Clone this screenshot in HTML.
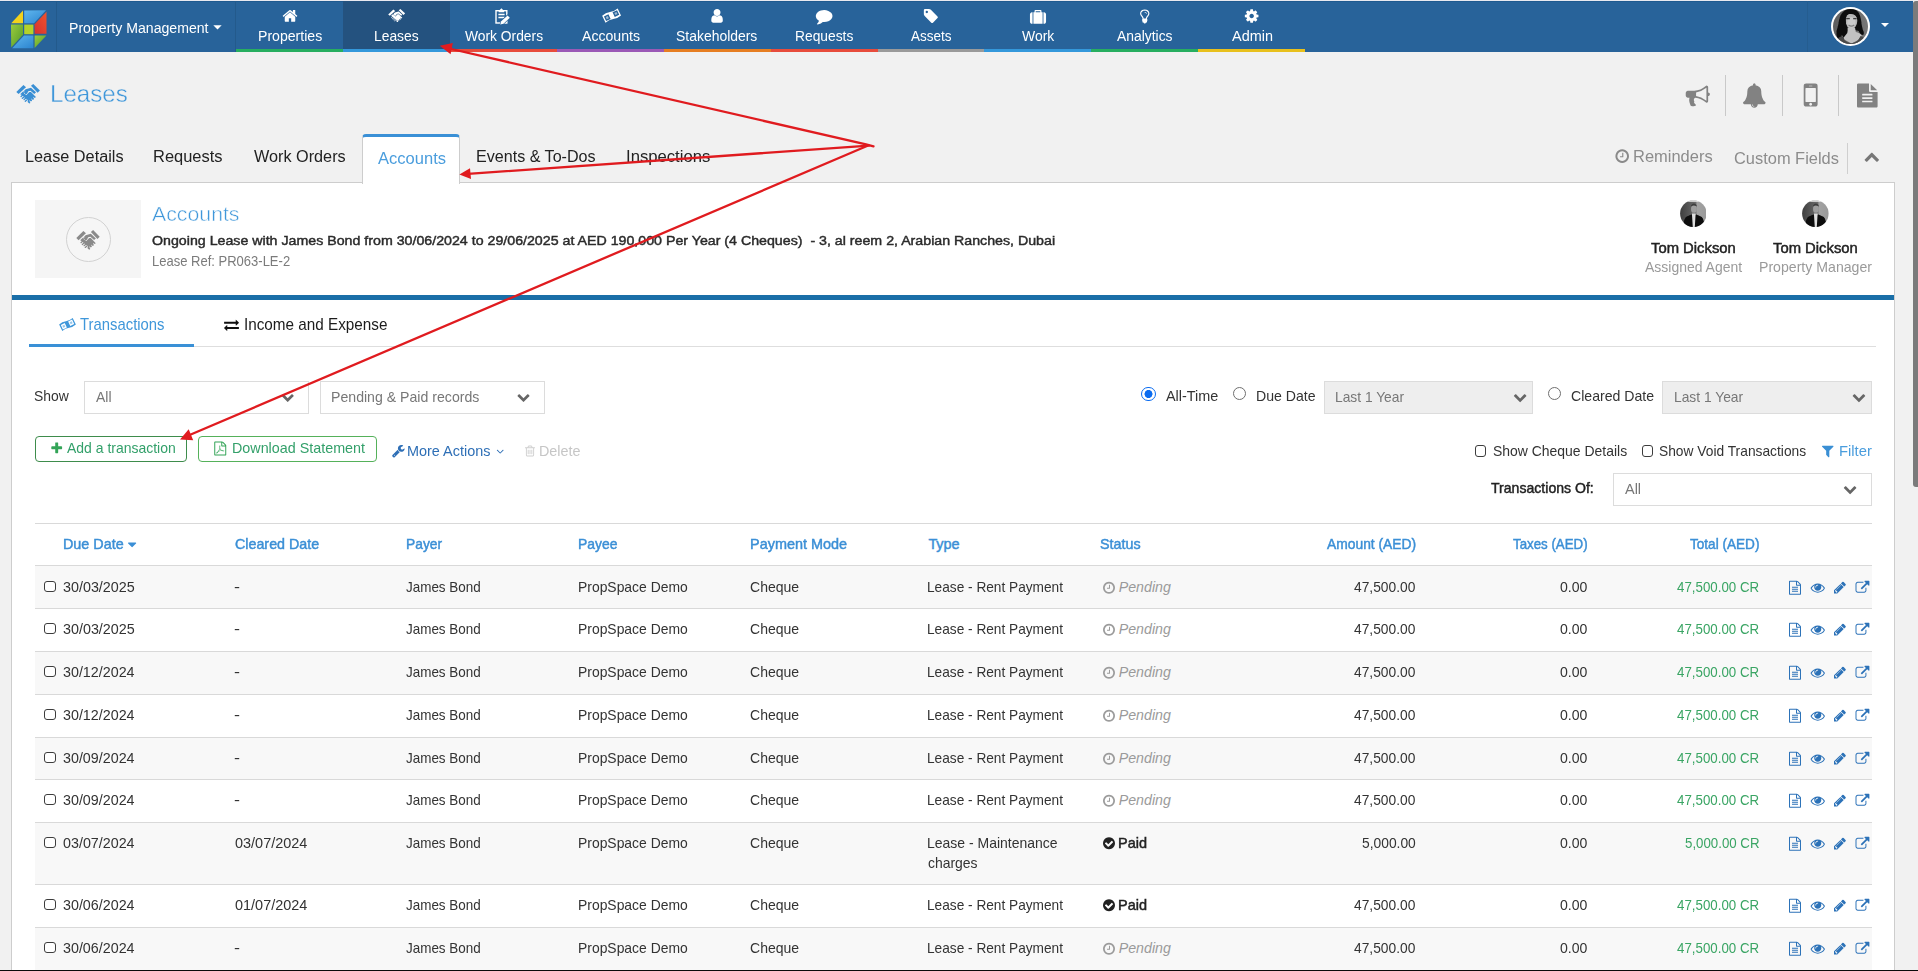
<!DOCTYPE html><html lang="en"><head><meta charset="utf-8"><title>Leases - Accounts</title><style>
html,body{margin:0;padding:0}body{width:1918px;height:971px;overflow:hidden;position:relative;background:#f1f1f1;font-family:"Liberation Sans",sans-serif;-webkit-font-smoothing:antialiased}
.b,.ic,.t{position:absolute;display:block}.t{white-space:pre;transform-origin:0 0;margin:0}.p{display:inline-block;width:0;height:0}
</style></head><body>
<svg width="0" height="0" style="position:absolute" aria-hidden="true"><defs><path id="g-angle_down" d="M1065 777 599 311Q589 301 576.0 301.0Q563 301 553 311L87 777Q77 787 77.0 800.0Q77 813 87 823L137 873Q147 883 160.0 883.0Q173 883 183 873L576 480L969 873Q979 883 992.0 883.0Q1005 883 1015 873L1065 823Q1075 813 1075.0 800.0Q1075 787 1065 777Z"/><path id="g-bell" d="M896 -144Q837 -144 794.5 -101.5Q752 -59 752 0Q752 16 736.0 16.0Q720 16 720 0Q720 -73 771.5 -124.5Q823 -176 896 -176Q912 -176 912.0 -160.0Q912 -144 896 -144ZM1728 128Q1728 76 1690.0 38.0Q1652 0 1600 0H1152Q1152 -106 1077.0 -181.0Q1002 -256 896.0 -256.0Q790 -256 715.0 -181.0Q640 -106 640 0H192Q140 0 102.0 38.0Q64 76 64 128Q114 170 155.0 216.0Q196 262 240.0 335.5Q284 409 314.5 494.0Q345 579 364.5 700.0Q384 821 384 960Q384 1112 501.0 1242.5Q618 1373 808 1401Q800 1420 800 1440Q800 1480 828.0 1508.0Q856 1536 896.0 1536.0Q936 1536 964.0 1508.0Q992 1480 992 1440Q992 1420 984 1401Q1174 1373 1291.0 1242.5Q1408 1112 1408 960Q1408 821 1427.5 700.0Q1447 579 1477.5 494.0Q1508 409 1552.0 335.5Q1596 262 1637.0 216.0Q1678 170 1728 128Z"/><path id="g-bulb" d="M736 960Q736 947 726.5 937.5Q717 928 704.0 928.0Q691 928 681.5 937.5Q672 947 672 960Q672 1006 618.0 1031.0Q564 1056 512 1056Q499 1056 489.5 1065.5Q480 1075 480.0 1088.0Q480 1101 489.5 1110.5Q499 1120 512 1120Q562 1120 611.5 1104.0Q661 1088 698.5 1050.0Q736 1012 736 960ZM896 960Q896 1032 861.5 1094.0Q827 1156 771.5 1195.5Q716 1235 648.5 1257.5Q581 1280 512.0 1280.0Q443 1280 375.5 1257.5Q308 1235 252.5 1195.5Q197 1156 162.5 1094.0Q128 1032 128 960Q128 859 196 780Q206 769 226.5 747.0Q247 725 257 714Q385 561 398 416H626Q639 561 767 714Q777 725 797.5 747.0Q818 769 828 780Q896 859 896 960ZM1024 960Q1024 805 921 692Q876 643 846.5 605.0Q817 567 787.0 509.5Q757 452 753 402Q800 374 800 320Q800 283 775 256Q800 229 800 192Q800 140 755 111Q768 88 768 64Q768 18 736.5 -7.0Q705 -32 659 -32Q639 -76 599.0 -102.0Q559 -128 512.0 -128.0Q465 -128 425.0 -102.0Q385 -76 365 -32Q319 -32 287.5 -7.0Q256 18 256 64Q256 88 269 111Q224 140 224 192Q224 229 249 256Q224 283 224 320Q224 374 271 402Q267 452 237.0 509.5Q207 567 177.5 605.0Q148 643 103 692Q0 805 0 960Q0 1059 44.5 1144.5Q89 1230 161.5 1286.5Q234 1343 325.5 1375.5Q417 1408 512.0 1408.0Q607 1408 698.5 1375.5Q790 1343 862.5 1286.5Q935 1230 979.5 1144.5Q1024 1059 1024 960Z"/><path id="g-bullhorn" d="M1664 896Q1717 896 1754.5 858.5Q1792 821 1792.0 768.0Q1792 715 1754.5 677.5Q1717 640 1664 640V256Q1664 204 1626.0 166.0Q1588 128 1536 128Q1119 475 724 508Q666 489 633.0 442.0Q600 395 602.0 341.5Q604 288 642 249Q622 216 619.0 183.5Q616 151 625.0 125.5Q634 100 658.5 70.5Q683 41 706.5 20.5Q730 0 768 -30Q739 -88 656.5 -113.0Q574 -138 488.0 -124.5Q402 -111 356 -69Q349 -46 326.5 18.5Q304 83 294.5 113.0Q285 143 271.5 202.0Q258 261 256.5 303.0Q255 345 260.0 401.5Q265 458 282 512H160Q94 512 47.0 559.0Q0 606 0 672V864Q0 930 47.0 977.0Q94 1024 160 1024H640Q1075 1024 1536 1408Q1588 1408 1626.0 1370.0Q1664 1332 1664 1280ZM1536 292V1246Q1142 944 768 903V633Q1145 591 1536 292Z"/><path id="g-caret_down" d="M1005 787 557 339Q538 320 512.0 320.0Q486 320 467 339L19 787Q0 806 0.0 832.0Q0 858 19.0 877.0Q38 896 64 896H960Q986 896 1005.0 877.0Q1024 858 1024.0 832.0Q1024 806 1005 787Z"/><path id="g-check_circle" d="M1284 802Q1284 830 1266 848L1175 938Q1156 957 1130.0 957.0Q1104 957 1085 938L677 531L451 757Q432 776 406.0 776.0Q380 776 361 757L270 667Q252 649 252 621Q252 594 270 576L632 214Q651 195 677 195Q704 195 723 214L1266 757Q1284 775 1284 802ZM1433.0 1025.5Q1536 849 1536.0 640.0Q1536 431 1433.0 254.5Q1330 78 1153.5 -25.0Q977 -128 768.0 -128.0Q559 -128 382.5 -25.0Q206 78 103.0 254.5Q0 431 0.0 640.0Q0 849 103.0 1025.5Q206 1202 382.5 1305.0Q559 1408 768.0 1408.0Q977 1408 1153.5 1305.0Q1330 1202 1433.0 1025.5Z"/><path id="g-chev_down" d="M1683 728 941 -13Q922 -32 896.0 -32.0Q870 -32 851 -13L109 728Q90 747 90.0 773.5Q90 800 109 819L275 984Q294 1003 320.0 1003.0Q346 1003 365 984L896 453L1427 984Q1446 1003 1472.0 1003.0Q1498 1003 1517 984L1683 819Q1702 800 1702.0 773.5Q1702 747 1683 728Z"/><path id="g-chev_up" d="M1683 205 1517 40Q1498 21 1472.0 21.0Q1446 21 1427 40L896 571L365 40Q346 21 320.0 21.0Q294 21 275 40L109 205Q90 224 90.0 250.5Q90 277 109 296L851 1037Q870 1056 896.0 1056.0Q922 1056 941 1037L1683 296Q1702 277 1702.0 250.5Q1702 224 1683 205Z"/><path id="g-clock" d="M896 992V544Q896 530 887.0 521.0Q878 512 864 512H544Q530 512 521.0 521.0Q512 530 512 544V608Q512 622 521.0 631.0Q530 640 544 640H768V992Q768 1006 777.0 1015.0Q786 1024 800 1024H864Q878 1024 887.0 1015.0Q896 1006 896 992ZM1239.0 367.0Q1312 492 1312.0 640.0Q1312 788 1239.0 913.0Q1166 1038 1041.0 1111.0Q916 1184 768.0 1184.0Q620 1184 495.0 1111.0Q370 1038 297.0 913.0Q224 788 224.0 640.0Q224 492 297.0 367.0Q370 242 495.0 169.0Q620 96 768.0 96.0Q916 96 1041.0 169.0Q1166 242 1239.0 367.0ZM1433.0 1025.5Q1536 849 1536.0 640.0Q1536 431 1433.0 254.5Q1330 78 1153.5 -25.0Q977 -128 768.0 -128.0Q559 -128 382.5 -25.0Q206 78 103.0 254.5Q0 431 0.0 640.0Q0 849 103.0 1025.5Q206 1202 382.5 1305.0Q559 1408 768.0 1408.0Q977 1408 1153.5 1305.0Q1330 1202 1433.0 1025.5Z"/><path id="g-cog" d="M949.0 459.0Q1024 534 1024.0 640.0Q1024 746 949.0 821.0Q874 896 768.0 896.0Q662 896 587.0 821.0Q512 746 512.0 640.0Q512 534 587.0 459.0Q662 384 768.0 384.0Q874 384 949.0 459.0ZM1536 749V527Q1536 515 1528.0 504.0Q1520 493 1508 491L1323 463Q1304 409 1284 372Q1319 322 1391 234Q1401 222 1401.0 209.0Q1401 196 1392 186Q1365 149 1293.0 78.0Q1221 7 1199 7Q1187 7 1173 16L1035 124Q991 101 944 86Q928 -50 915 -100Q908 -128 879 -128H657Q643 -128 632.5 -119.5Q622 -111 621 -98L593 86Q544 102 503 123L362 16Q352 7 337 7Q323 7 312 18Q186 132 147 186Q140 196 140 209Q140 221 148 232Q163 253 199.0 298.5Q235 344 253 369Q226 419 212 468L29 495Q16 497 8.0 507.5Q0 518 0 531V753Q0 765 8.0 776.0Q16 787 27 789L213 817Q227 863 252 909Q212 966 145 1047Q135 1059 135 1071Q135 1081 144 1094Q170 1130 242.5 1201.5Q315 1273 337 1273Q350 1273 363 1263L501 1156Q545 1179 592 1194Q608 1330 621 1380Q628 1408 657 1408H879Q893 1408 903.5 1399.5Q914 1391 915 1378L943 1194Q992 1178 1033 1157L1175 1264Q1184 1273 1199 1273Q1212 1273 1224 1263Q1353 1144 1389 1093Q1396 1085 1396 1071Q1396 1059 1388 1048Q1373 1027 1337.0 981.5Q1301 936 1283 911Q1309 861 1324 813L1507 785Q1520 783 1528.0 772.5Q1536 762 1536 749Z"/><path id="g-comment" d="M896 0Q826 0 751 8Q553 -167 291 -234Q242 -248 177 -256Q160 -258 146.5 -247.0Q133 -236 129 -218V-217Q126 -213 128.5 -205.0Q131 -197 130.5 -195.0Q130 -193 135.0 -185.5Q140 -178 141.0 -176.5Q142 -175 148.0 -168.0Q154 -161 156 -159Q163 -151 187.0 -124.5Q211 -98 221.5 -86.5Q232 -75 252.5 -47.0Q273 -19 285.0 4.0Q297 27 312.0 63.0Q327 99 338 139Q181 228 90.5 359.0Q0 490 0 640Q0 770 71.0 888.5Q142 1007 262.0 1093.0Q382 1179 548.0 1229.5Q714 1280 896 1280Q1140 1280 1346.0 1194.5Q1552 1109 1672.0 961.5Q1792 814 1792.0 640.0Q1792 466 1672.0 318.5Q1552 171 1346.0 85.5Q1140 0 896 0Z"/><path id="g-exchange" d="M1792 352V160Q1792 147 1782.5 137.5Q1773 128 1760 128H384V-64Q384 -77 374.5 -86.5Q365 -96 352 -96Q340 -96 328 -86L9 234Q0 243 0 256Q0 270 9 279L329 599Q338 608 352 608Q365 608 374.5 598.5Q384 589 384 576V384H1760Q1773 384 1782.5 374.5Q1792 365 1792 352ZM1783 873 1463 553Q1454 544 1440 544Q1427 544 1417.5 553.5Q1408 563 1408 576V768H32Q19 768 9.5 777.5Q0 787 0 800V992Q0 1005 9.5 1014.5Q19 1024 32 1024H1408V1216Q1408 1230 1417.0 1239.0Q1426 1248 1440 1248Q1452 1248 1464 1238L1783 919Q1792 910 1792.0 896.0Q1792 882 1783 873Z"/><path id="g-ext" d="M1408 608V288Q1408 169 1323.5 84.5Q1239 0 1120 0H288Q169 0 84.5 84.5Q0 169 0 288V1120Q0 1239 84.5 1323.5Q169 1408 288 1408H992Q1006 1408 1015.0 1399.0Q1024 1390 1024 1376V1312Q1024 1298 1015.0 1289.0Q1006 1280 992 1280H288Q222 1280 175.0 1233.0Q128 1186 128 1120V288Q128 222 175.0 175.0Q222 128 288 128H1120Q1186 128 1233.0 175.0Q1280 222 1280 288V608Q1280 622 1289.0 631.0Q1298 640 1312 640H1376Q1390 640 1399.0 631.0Q1408 622 1408 608ZM1792 1472V960Q1792 934 1773.0 915.0Q1754 896 1728.0 896.0Q1702 896 1683 915L1507 1091L855 439Q845 429 832.0 429.0Q819 429 809 439L695 553Q685 563 685.0 576.0Q685 589 695 599L1347 1251L1171 1427Q1152 1446 1152.0 1472.0Q1152 1498 1171.0 1517.0Q1190 1536 1216 1536H1728Q1754 1536 1773.0 1517.0Q1792 1498 1792 1472Z"/><path id="g-eye" d="M1664 576Q1512 812 1283 929Q1344 825 1344 704Q1344 519 1212.5 387.5Q1081 256 896.0 256.0Q711 256 579.5 387.5Q448 519 448 704Q448 825 509 929Q280 812 128 576Q261 371 461.5 249.5Q662 128 896.0 128.0Q1130 128 1330.5 249.5Q1531 371 1664 576ZM896 1008Q771 1008 681.5 918.5Q592 829 592 704Q592 684 606.0 670.0Q620 656 640.0 656.0Q660 656 674.0 670.0Q688 684 688 704Q688 790 749.0 851.0Q810 912 896 912Q916 912 930.0 926.0Q944 940 944.0 960.0Q944 980 930.0 994.0Q916 1008 896 1008ZM1772 507Q1632 277 1395.5 138.5Q1159 0 896.0 0.0Q633 0 396.5 139.0Q160 278 20 507Q0 542 0.0 576.0Q0 610 20 645Q160 874 396.5 1013.0Q633 1152 896.0 1152.0Q1159 1152 1395.5 1013.0Q1632 874 1772 645Q1792 610 1792.0 576.0Q1792 542 1772 507Z"/><path id="g-file_pdf" d="M1468 1156Q1496 1128 1516.0 1080.0Q1536 1032 1536 992V-160Q1536 -200 1508.0 -228.0Q1480 -256 1440 -256H96Q56 -256 28.0 -228.0Q0 -200 0 -160V1440Q0 1480 28.0 1508.0Q56 1536 96 1536H992Q1032 1536 1080.0 1516.0Q1128 1496 1156 1468ZM1024 1400V1024H1400Q1390 1053 1378 1065L1065 1378Q1053 1390 1024 1400ZM1408 -128V896H992Q952 896 924.0 924.0Q896 952 896 992V1408H128V-128ZM894 465Q927 439 978 409Q1037 416 1095 416Q1242 416 1272 367Q1288 345 1274 315Q1274 314 1273.0 313.0Q1272 312 1271 311V310Q1265 272 1200 272Q1152 272 1085.0 292.0Q1018 312 955 345Q734 321 563 262Q410 0 321 0Q306 0 293 7L269 19Q268 20 263 24Q253 34 257 60Q266 100 313.0 151.5Q360 203 445 248Q459 257 468 242Q470 240 470 238Q522 323 577 435Q645 571 681 697Q657 779 650.5 856.5Q644 934 657 984Q668 1024 699 1024H720H721Q744 1024 756 1009Q774 988 765 941Q763 935 761 933Q762 930 762 925V895Q760 772 748 703Q803 539 894 465ZM318 54Q370 78 455 212Q404 172 367.5 128.0Q331 84 318 54ZM716 974Q701 932 714 842Q715 849 721 886Q721 889 728 929Q729 933 732 937Q731 938 731 939Q730 941 730 942Q729 964 717 978Q717 977 716 976ZM592 313Q727 367 876 394Q874 395 863.0 403.5Q852 412 847 417Q771 484 720 593Q693 507 637 396Q607 340 592 313ZM1238 329Q1214 353 1098 353Q1174 325 1222 325Q1236 325 1240 326Q1240 327 1238 329Z"/><path id="g-file_text" d="M1468 1060Q1482 1046 1496 1024H1024V1496Q1046 1482 1060 1468ZM992 896H1536V-160Q1536 -200 1508.0 -228.0Q1480 -256 1440 -256H96Q56 -256 28.0 -228.0Q0 -200 0 -160V1440Q0 1480 28.0 1508.0Q56 1536 96 1536H896V992Q896 952 924.0 924.0Q952 896 992 896ZM1152 160V224Q1152 238 1143.0 247.0Q1134 256 1120 256H416Q402 256 393.0 247.0Q384 238 384 224V160Q384 146 393.0 137.0Q402 128 416 128H1120Q1134 128 1143.0 137.0Q1152 146 1152 160ZM1152 416V480Q1152 494 1143.0 503.0Q1134 512 1120 512H416Q402 512 393.0 503.0Q384 494 384 480V416Q384 402 393.0 393.0Q402 384 416 384H1120Q1134 384 1143.0 393.0Q1152 402 1152 416ZM1152 672V736Q1152 750 1143.0 759.0Q1134 768 1120 768H416Q402 768 393.0 759.0Q384 750 384 736V672Q384 658 393.0 649.0Q402 640 416 640H1120Q1134 640 1143.0 649.0Q1152 658 1152 672Z"/><path id="g-file_text_o" d="M1468 1156Q1496 1128 1516.0 1080.0Q1536 1032 1536 992V-160Q1536 -200 1508.0 -228.0Q1480 -256 1440 -256H96Q56 -256 28.0 -228.0Q0 -200 0 -160V1440Q0 1480 28.0 1508.0Q56 1536 96 1536H992Q1032 1536 1080.0 1516.0Q1128 1496 1156 1468ZM1024 1400V1024H1400Q1390 1053 1378 1065L1065 1378Q1053 1390 1024 1400ZM1408 -128V896H992Q952 896 924.0 924.0Q896 952 896 992V1408H128V-128ZM384 736Q384 750 393.0 759.0Q402 768 416 768H1120Q1134 768 1143.0 759.0Q1152 750 1152 736V672Q1152 658 1143.0 649.0Q1134 640 1120 640H416Q402 640 393.0 649.0Q384 658 384 672ZM1120 512Q1134 512 1143.0 503.0Q1152 494 1152 480V416Q1152 402 1143.0 393.0Q1134 384 1120 384H416Q402 384 393.0 393.0Q384 402 384 416V480Q384 494 393.0 503.0Q402 512 416 512ZM1120 256Q1134 256 1143.0 247.0Q1152 238 1152 224V160Q1152 146 1143.0 137.0Q1134 128 1120 128H416Q402 128 393.0 137.0Q384 146 384 160V224Q384 238 393.0 247.0Q402 256 416 256Z"/><path id="g-filter" d="M1403 1241Q1420 1200 1389 1171L896 678V-64Q896 -106 857 -123Q844 -128 832 -128Q805 -128 787 -109L531 147Q512 166 512 192V678L19 1171Q-12 1200 5 1241Q22 1280 64 1280H1344Q1386 1280 1403 1241Z"/><path id="g-home" d="M1408 544V64Q1408 38 1389.0 19.0Q1370 0 1344 0H960V384H704V0H320Q294 0 275.0 19.0Q256 38 256 64V544Q256 545 256.5 547.0Q257 549 257 550L832 1024L1407 550Q1408 548 1408 544ZM1631 613 1569 539Q1561 530 1548 528H1545Q1532 528 1524 535L832 1112L140 535Q128 527 116 528Q103 530 95 539L33 613Q25 623 26.0 636.5Q27 650 37 658L756 1257Q788 1283 832.0 1283.0Q876 1283 908 1257L1152 1053V1248Q1152 1262 1161.0 1271.0Q1170 1280 1184 1280H1376Q1390 1280 1399.0 1271.0Q1408 1262 1408 1248V840L1627 658Q1637 650 1638.0 636.5Q1639 623 1631 613Z"/><path id="g-mobile" d="M440.5 71.5Q464 95 464.0 128.0Q464 161 440.5 184.5Q417 208 384.0 208.0Q351 208 327.5 184.5Q304 161 304.0 128.0Q304 95 327.5 71.5Q351 48 384.0 48.0Q417 48 440.5 71.5ZM672 288V992Q672 1005 662.5 1014.5Q653 1024 640 1024H128Q115 1024 105.5 1014.5Q96 1005 96 992V288Q96 275 105.5 265.5Q115 256 128 256H640Q653 256 662.5 265.5Q672 275 672 288ZM464 1152H304Q288 1152 288.0 1136.0Q288 1120 304 1120H464Q480 1120 480.0 1136.0Q480 1152 464 1152ZM768 1152V128Q768 76 730.0 38.0Q692 0 640 0H128Q76 0 38.0 38.0Q0 76 0 128V1152Q0 1204 38.0 1242.0Q76 1280 128 1280H640Q692 1280 730.0 1242.0Q768 1204 768 1152Z"/><path id="g-pencil" d="M363 0 454 91 219 326 128 235V128H256V0ZM886 928Q886 950 864 950Q854 950 847 943L305 401Q298 394 298 384Q298 362 320 362Q330 362 337 369L879 911Q886 918 886 928ZM832 1120 1248 704 416 -128H0V288ZM1515 1024Q1515 971 1478 934L1312 768L896 1184L1062 1349Q1098 1387 1152 1387Q1205 1387 1243 1349L1478 1115Q1515 1076 1515 1024Z"/><path id="g-plus" d="M1408 800V608Q1408 568 1380.0 540.0Q1352 512 1312 512H896V96Q896 56 868.0 28.0Q840 0 800 0H608Q568 0 540.0 28.0Q512 56 512 96V512H96Q56 512 28.0 540.0Q0 568 0 608V800Q0 840 28.0 868.0Q56 896 96 896H512V1312Q512 1352 540.0 1380.0Q568 1408 608 1408H800Q840 1408 868.0 1380.0Q896 1352 896 1312V896H1312Q1352 896 1380.0 868.0Q1408 840 1408 800Z"/><path id="g-suitcase" d="M640 1152H1152V1280H640ZM288 1152V-128H224Q132 -128 66.0 -62.0Q0 4 0 96V928Q0 1020 66.0 1086.0Q132 1152 224 1152ZM1408 1152V-128H384V1152H512V1312Q512 1352 540.0 1380.0Q568 1408 608 1408H1184Q1224 1408 1252.0 1380.0Q1280 1352 1280 1312V1152ZM1792 928V96Q1792 4 1726.0 -62.0Q1660 -128 1568 -128H1504V1152H1568Q1660 1152 1726.0 1086.0Q1792 1020 1792 928Z"/><path id="g-tag" d="M410.5 997.5Q448 1035 448.0 1088.0Q448 1141 410.5 1178.5Q373 1216 320.0 1216.0Q267 1216 229.5 1178.5Q192 1141 192.0 1088.0Q192 1035 229.5 997.5Q267 960 320.0 960.0Q373 960 410.5 997.5ZM1515 512Q1515 459 1478 422L987 -70Q948 -107 896 -107Q843 -107 806 -70L91 646Q53 683 26.5 747.0Q0 811 0 864V1280Q0 1332 38.0 1370.0Q76 1408 128 1408H544Q597 1408 661.0 1381.5Q725 1355 763 1317L1478 603Q1515 564 1515 512Z"/><path id="g-trash" d="M512 800V224Q512 210 503.0 201.0Q494 192 480 192H416Q402 192 393.0 201.0Q384 210 384 224V800Q384 814 393.0 823.0Q402 832 416 832H480Q494 832 503.0 823.0Q512 814 512 800ZM768 800V224Q768 210 759.0 201.0Q750 192 736 192H672Q658 192 649.0 201.0Q640 210 640 224V800Q640 814 649.0 823.0Q658 832 672 832H736Q750 832 759.0 823.0Q768 814 768 800ZM1024 800V224Q1024 210 1015.0 201.0Q1006 192 992 192H928Q914 192 905.0 201.0Q896 210 896 224V800Q896 814 905.0 823.0Q914 832 928 832H992Q1006 832 1015.0 823.0Q1024 814 1024 800ZM1152 76V1024H256V76Q256 54 263.0 35.5Q270 17 277.5 8.5Q285 0 288 0H1120Q1123 0 1130.5 8.5Q1138 17 1145.0 35.5Q1152 54 1152 76ZM480 1152H928L880 1269Q873 1278 863 1280H546Q536 1278 529 1269ZM1408 1120V1056Q1408 1042 1399.0 1033.0Q1390 1024 1376 1024H1280V76Q1280 -7 1233.0 -67.5Q1186 -128 1120 -128H288Q222 -128 175.0 -69.5Q128 -11 128 72V1024H32Q18 1024 9.0 1033.0Q0 1042 0 1056V1120Q0 1134 9.0 1143.0Q18 1152 32 1152H341L411 1319Q426 1356 465.0 1382.0Q504 1408 544 1408H864Q904 1408 943.0 1382.0Q982 1356 997 1319L1067 1152H1376Q1390 1152 1399.0 1143.0Q1408 1134 1408 1120Z"/><path id="g-user" d="M1280 137Q1280 28 1217.5 -50.0Q1155 -128 1067 -128H213Q125 -128 62.5 -50.0Q0 28 0 137Q0 222 8.5 297.5Q17 373 40.0 449.5Q63 526 98.5 580.5Q134 635 192.5 669.5Q251 704 327 704Q458 576 640.0 576.0Q822 576 953 704Q1029 704 1087.5 669.5Q1146 635 1181.5 580.5Q1217 526 1240.0 449.5Q1263 373 1271.5 297.5Q1280 222 1280 137ZM911.5 1295.5Q1024 1183 1024.0 1024.0Q1024 865 911.5 752.5Q799 640 640.0 640.0Q481 640 368.5 752.5Q256 865 256.0 1024.0Q256 1183 368.5 1295.5Q481 1408 640.0 1408.0Q799 1408 911.5 1295.5Z"/><path id="g-wrench" d="M365.0 19.0Q384 38 384.0 64.0Q384 90 365.0 109.0Q346 128 320.0 128.0Q294 128 275.0 109.0Q256 90 256.0 64.0Q256 38 275.0 19.0Q294 0 320.0 0.0Q346 0 365.0 19.0ZM1028 484 346 -198Q309 -235 256 -235Q204 -235 165 -198L59 -90Q21 -54 21 0Q21 53 59 91L740 772Q779 674 854.5 598.5Q930 523 1028 484ZM1662 919Q1662 880 1639 813Q1592 679 1474.5 595.5Q1357 512 1216 512Q1031 512 899.5 643.5Q768 775 768.0 960.0Q768 1145 899.5 1276.5Q1031 1408 1216 1408Q1274 1408 1337.5 1391.5Q1401 1375 1445 1345Q1461 1334 1461.0 1317.0Q1461 1300 1445 1289L1152 1120V896L1345 789Q1350 792 1424.0 837.5Q1498 883 1559.5 918.5Q1621 954 1630 954Q1645 954 1653.5 944.0Q1662 934 1662 919Z"/></defs></svg>
<div class="b" style="left:0px;top:0px;width:1918px;height:1px;background:#e9e9f0;"></div>
<div class="b" style="left:0px;top:1px;width:1913px;height:51px;background:#28639a;"></div>
<div class="b" style="left:0px;top:1px;width:1913px;height:1px;background:#1f5a90;"></div>
<div class="b" style="left:56px;top:1px;width:1px;height:51px;background:#235a8c;"></div>
<div class="b" style="left:235px;top:1px;width:1px;height:51px;background:#235a8c;"></div>
<div class="b" style="left:1807px;top:1px;width:1px;height:51px;background:#255d90;"></div>
<div class="b" style="left:236px;top:49px;width:107px;height:3px;background:#27ae60;"></div>
<div class="b" style="left:343px;top:1px;width:107px;height:51px;background:#24527f;"></div>
<div class="b" style="left:343px;top:49px;width:107px;height:3px;background:#3498db;"></div>
<div class="b" style="left:450px;top:49px;width:107px;height:3px;background:#e74c3c;"></div>
<div class="b" style="left:557px;top:49px;width:107px;height:3px;background:#9b59b6;"></div>
<div class="b" style="left:664px;top:49px;width:107px;height:3px;background:#e67e22;"></div>
<div class="b" style="left:771px;top:49px;width:107px;height:3px;background:#e74c3c;"></div>
<div class="b" style="left:878px;top:49px;width:106px;height:3px;background:#9a9a9a;"></div>
<div class="b" style="left:984px;top:49px;width:107px;height:3px;background:#3498db;"></div>
<div class="b" style="left:1091px;top:49px;width:107px;height:3px;background:#27ae60;"></div>
<div class="b" style="left:1198px;top:49px;width:107px;height:3px;background:#e8c01c;"></div>
<svg class="ic" style="left:213px;top:25px;width:9px;height:5px" viewBox="0 0 9 5"><path d="M0.3 0.3h8.4L4.5 4.6z" fill="#fff"/></svg>
<svg class="ic" style="left:1881px;top:23px;width:8px;height:4px" viewBox="0 0 8 4"><path d="M0 0h8L4 4z" fill="#fff"/></svg>
<svg class="ic" style="left:10px;top:9px;width:38px;height:41px" viewBox="0 0 38 41" aria-label="logo">
<defs><linearGradient id="lb" x1="0" y1="0" x2="1" y2="1"><stop offset="0" stop-color="#5fb6ee"/><stop offset="1" stop-color="#2b84cf"/></linearGradient>
<linearGradient id="lg" x1="0" y1="0" x2="1" y2="1"><stop offset="0" stop-color="#9ccb3b"/><stop offset="1" stop-color="#4f9a2c"/></linearGradient>
<linearGradient id="lr" x1="1" y1="0" x2="0" y2="1"><stop offset="0" stop-color="#f0532d"/><stop offset="1" stop-color="#d6312f"/></linearGradient></defs>
<path d="M13 1.6v12.6H1.2z" fill="#f2d21c"/>
<path d="M14.2 1.6L36 1.2 24 14.2h-9.8z" fill="url(#lb)"/>
<path d="M36.5 2.8v22H24.6V15.2z" fill="url(#lr)"/>
<path d="M1 15.6h12v10.2L1.2 38.6z" fill="url(#lg)"/>
<path d="M14.2 15.6h9.2v9.6h-9.2z" fill="#b4d22b"/>
<path d="M14 26.6h9.4v12.6H2.2z" fill="url(#lb)"/>
<path d="M24.6 26.6h11.8L24.6 39z" fill="url(#lg)"/></svg>
<svg class="ic" style="left:1831px;top:7px;width:39px;height:39px" viewBox="0 0 39 39" aria-label="user">
<defs><clipPath id="ua"><circle cx="19.5" cy="19.5" r="17.5"/></clipPath><filter id="ub" x="-10%" y="-10%" width="120%" height="120%"><feGaussianBlur stdDeviation="0.7"/></filter>
<linearGradient id="ug" x1="0" x2="1"><stop offset="0" stop-color="#5c5c5c"/><stop offset="1" stop-color="#787878"/></linearGradient></defs>
<circle cx="19.5" cy="19.5" r="19.5" fill="#fff"/>
<g clip-path="url(#ua)"><rect width="39" height="39" fill="url(#ug)"/><g filter="url(#ub)">
<path d="M20 1.800c-5.500 0-9 3-11 8-1.500 4-1.200 7.500-2.700 11.500-1.200 3.200-1.200 7 .2 10 1.200 2.300 3.300 3 5.300 1.800 2.500-1.500 4-4.500 4.500-8l7.500-2 4 1c.5 2 1.800 3.500 4 4 1.300-.6 1.300-2 .7-3.500-1.400-3.500-1.800-7-2.300-10.500-.6-4.500-1.500-7.500-3.500-9.700-1.700-1.700-3.900-2.600-6.700-2.600z" fill="#0e0e0e"/>
<ellipse cx="20.400" cy="13.800" rx="5.900" ry="8" fill="#b4b4b4"/>
<ellipse cx="20.400" cy="15.500" rx="4.200" ry="5.600" fill="#c9c9c9"/>
<path d="M16.600 20.500h7.400l.8 4.500c2.500.5 4.500 1.500 6 3.500l-3.500 4.500-6.800 3.500-6.500-3.500-3.500-4c1.500-2.200 3.400-3.500 5.600-4z" fill="#c2c2c2"/>
<path d="M3 40c.8-6 3.500-9.500 8-11 2 4.500 5 7 9.300 7.200 4.300-.2 7.200-2.700 9.200-7.200 4.500 1.500 7 5 8 11z" fill="#4a4a4a"/>
<path d="M15.200 11.600h3.600M22.200 11.600h3.400" stroke="#3c3c3c" stroke-width="1.200"/><path d="M17.500 18q2.900 2.200 5.800 0" stroke="#7c7c7c" fill="none" stroke-width="1.100"/>
<path d="M14 9c1.500-4 6.500-5.500 10.500-3.300 1.800 1 2.600 3 2.800 6-2-3.200-4.300-4.800-7.300-4.800-2.400 0-4.400.6-6 2.100z" fill="#0e0e0e"/>
<path d="M14.500 7c-2.500 4.500-1 9-3 13.500-1.400 3.200-1.400 7 .8 10.500l4-5c.8-3.500-.5-6-1.300-9.500z" fill="#0e0e0e"/></g></g></svg>
<div class="b" style="left:1725px;top:75px;width:1px;height:41px;background:#c9c9c9;"></div>
<div class="b" style="left:1782px;top:75px;width:1px;height:41px;background:#c9c9c9;"></div>
<div class="b" style="left:1838px;top:75px;width:1px;height:41px;background:#c9c9c9;"></div>
<div class="b" style="left:1847px;top:143px;width:1px;height:31px;background:#cfcfcf;"></div>
<div class="b" style="left:11px;top:182px;width:1884px;height:803px;background:#fff;border:1px solid #cdcdcd;box-sizing:border-box;"></div>
<div class="b" style="left:362px;top:134px;width:98px;height:50px;background:#fff;border:1px solid #cdcdcd;box-sizing:border-box;border-bottom:0;border-top:3px solid #3a90d6;border-radius:4px 4px 0 0;"></div>
<div class="b" style="left:35px;top:200px;width:106px;height:78px;background:#f5f5f5;"></div>
<div class="b" style="left:65.500px;top:216.500px;width:45.500px;height:45.500px;border:1.800px solid #d2d2d2;border-radius:50%;box-sizing:border-box;background:#f6f6f6"></div>
<svg class="ic" style="left:1679.7px;top:200.300px;width:26.800px;height:27.200px" viewBox="0 0 27 27" aria-label="agent">
<defs><clipPath id="c1693"><circle cx="13.5" cy="13.5" r="13.4"/></clipPath><filter id="f1693" x="-10%" y="-10%" width="120%" height="120%"><feGaussianBlur stdDeviation="0.55"/></filter>
<linearGradient id="g1693" x1="0" x2="1"><stop offset="0" stop-color="#3e3e3e"/><stop offset=".58" stop-color="#6b6b6b"/><stop offset=".64" stop-color="#a2a2a2"/><stop offset="1" stop-color="#9a9a9a"/></linearGradient></defs>
<g clip-path="url(#c1693)"><rect width="27" height="27" fill="url(#g1693)"/><g filter="url(#f1693)">
<rect x="3" y="-1" width="21" height="2.600" fill="#e8e8e8"/>
<ellipse cx="14" cy="8.800" rx="2.900" ry="3.900" fill="#9e9e9e"/>
<path d="M11 6.300c.4-2 1.600-2.900 3-2.900s2.700.9 3 2.900c-1-.7-2-1-3-1s-2 .3-3 1z" fill="#3c3c3c"/>
<path d="M3.500 28c0-5 .5-8.500 2.500-11l5.500-2.700 2.500 1.700 2.500-1.700 5.500 2.700c2 2.500 2.500 6 2.500 11z" fill="#080808"/>
<path d="M12 13.500h3.800l-.9 14h-2z" fill="#dedede"/></g></g></svg>
<svg class="ic" style="left:1801.9px;top:200.300px;width:26.800px;height:27.200px" viewBox="0 0 27 27" aria-label="agent">
<defs><clipPath id="c1815"><circle cx="13.5" cy="13.5" r="13.4"/></clipPath><filter id="f1815" x="-10%" y="-10%" width="120%" height="120%"><feGaussianBlur stdDeviation="0.55"/></filter>
<linearGradient id="g1815" x1="0" x2="1"><stop offset="0" stop-color="#3e3e3e"/><stop offset=".58" stop-color="#6b6b6b"/><stop offset=".64" stop-color="#a2a2a2"/><stop offset="1" stop-color="#9a9a9a"/></linearGradient></defs>
<g clip-path="url(#c1815)"><rect width="27" height="27" fill="url(#g1815)"/><g filter="url(#f1815)">
<rect x="3" y="-1" width="21" height="2.600" fill="#e8e8e8"/>
<ellipse cx="14" cy="8.800" rx="2.900" ry="3.900" fill="#9e9e9e"/>
<path d="M11 6.300c.4-2 1.600-2.900 3-2.900s2.700.9 3 2.900c-1-.7-2-1-3-1s-2 .3-3 1z" fill="#3c3c3c"/>
<path d="M3.500 28c0-5 .5-8.500 2.500-11l5.500-2.700 2.500 1.700 2.500-1.700 5.500 2.700c2 2.500 2.500 6 2.500 11z" fill="#080808"/>
<path d="M12 13.500h3.800l-.9 14h-2z" fill="#dedede"/></g></g></svg>
<div class="b" style="left:12px;top:295px;width:1882px;height:5px;background:#1a6fa8;"></div>
<div class="b" style="left:29px;top:346px;width:1847px;height:1px;background:#dedede;"></div>
<div class="b" style="left:29px;top:344px;width:165px;height:3px;background:#3a90d6;"></div>
<div class="b" style="left:84px;top:381px;width:225px;height:33px;background:#fff;border:1px solid #dcdcdc;box-sizing:border-box;"></div>
<div class="b" style="left:320px;top:381px;width:225px;height:33px;background:#fff;border:1px solid #dcdcdc;box-sizing:border-box;"></div>
<div class="b" style="left:1324px;top:381px;width:209px;height:33px;background:#eeeeee;border:1px solid #dcdcdc;box-sizing:border-box;"></div>
<div class="b" style="left:1662px;top:381px;width:210px;height:33px;background:#eeeeee;border:1px solid #dcdcdc;box-sizing:border-box;"></div>
<div class="b" style="left:1613px;top:473px;width:259px;height:33px;background:#fff;border:1px solid #dcdcdc;box-sizing:border-box;"></div>
<div class="b" style="left:1141px;top:386.500px;width:14.500px;height:14.500px;border-radius:50%;border:1.600px solid #0b6cf0;box-sizing:border-box;background:radial-gradient(circle,#0b6cf0 0 3.700px,#fff 4.300px)"></div>
<div class="b" style="left:1232.7px;top:386.800px;width:13.600px;height:13.600px;border-radius:50%;border:1.200px solid #6f6f6f;box-sizing:border-box;background:#fff"></div>
<div class="b" style="left:1547.8px;top:386.800px;width:13.600px;height:13.600px;border-radius:50%;border:1.200px solid #6f6f6f;box-sizing:border-box;background:#fff"></div>
<div class="b" style="left:35px;top:436px;width:152px;height:26px;background:#fff;border:1px solid #3e8c4c;box-sizing:border-box;border-radius:4px;"></div>
<div class="b" style="left:198px;top:436px;width:179px;height:26px;background:#fff;border:1px solid #55b15a;box-sizing:border-box;border-radius:4px;"></div>
<div class="b" style="left:1474.8px;top:445.2px;width:11.2px;height:11.5px;border:1.500px solid #3d3d3d;border-radius:3px;box-sizing:border-box;background:#fff"></div>
<div class="b" style="left:1641.7px;top:445.2px;width:11.2px;height:11.5px;border:1.500px solid #3d3d3d;border-radius:3px;box-sizing:border-box;background:#fff"></div>
<div class="b" style="left:35px;top:565px;width:1837px;height:43px;background:#f8f8f8;"></div>
<div class="b" style="left:35px;top:651px;width:1837px;height:43px;background:#f8f8f8;"></div>
<div class="b" style="left:35px;top:737px;width:1837px;height:42px;background:#f8f8f8;"></div>
<div class="b" style="left:35px;top:822px;width:1837px;height:62px;background:#f8f8f8;"></div>
<div class="b" style="left:35px;top:927px;width:1837px;height:43px;background:#f8f8f8;"></div>
<div class="b" style="left:35px;top:523px;width:1837px;height:1px;background:#d9d9d9;"></div>
<div class="b" style="left:35px;top:565px;width:1837px;height:1px;background:#d9d9d9;"></div>
<div class="b" style="left:35px;top:608px;width:1837px;height:1px;background:#d9d9d9;"></div>
<div class="b" style="left:35px;top:651px;width:1837px;height:1px;background:#d9d9d9;"></div>
<div class="b" style="left:35px;top:694px;width:1837px;height:1px;background:#d9d9d9;"></div>
<div class="b" style="left:35px;top:737px;width:1837px;height:1px;background:#d9d9d9;"></div>
<div class="b" style="left:35px;top:779px;width:1837px;height:1px;background:#d9d9d9;"></div>
<div class="b" style="left:35px;top:822px;width:1837px;height:1px;background:#d9d9d9;"></div>
<div class="b" style="left:35px;top:884px;width:1837px;height:1px;background:#d9d9d9;"></div>
<div class="b" style="left:35px;top:927px;width:1837px;height:1px;background:#d9d9d9;"></div>
<div class="b" style="left:44.3px;top:581.3px;width:11.4px;height:11px;border:1.500px solid #3d3d3d;border-radius:3px;box-sizing:border-box;background:#fff"></div>
<div class="b" style="left:44.3px;top:623.3px;width:11.4px;height:11px;border:1.500px solid #3d3d3d;border-radius:3px;box-sizing:border-box;background:#fff"></div>
<div class="b" style="left:44.3px;top:666.3px;width:11.4px;height:11px;border:1.500px solid #3d3d3d;border-radius:3px;box-sizing:border-box;background:#fff"></div>
<div class="b" style="left:44.3px;top:709.3px;width:11.4px;height:11px;border:1.500px solid #3d3d3d;border-radius:3px;box-sizing:border-box;background:#fff"></div>
<div class="b" style="left:44.3px;top:752.3px;width:11.4px;height:11px;border:1.500px solid #3d3d3d;border-radius:3px;box-sizing:border-box;background:#fff"></div>
<div class="b" style="left:44.3px;top:794.3px;width:11.4px;height:11px;border:1.500px solid #3d3d3d;border-radius:3px;box-sizing:border-box;background:#fff"></div>
<div class="b" style="left:44.3px;top:837.3px;width:11.4px;height:11px;border:1.500px solid #3d3d3d;border-radius:3px;box-sizing:border-box;background:#fff"></div>
<div class="b" style="left:44.3px;top:899.3px;width:11.4px;height:11px;border:1.500px solid #3d3d3d;border-radius:3px;box-sizing:border-box;background:#fff"></div>
<div class="b" style="left:44.3px;top:942.3px;width:11.4px;height:11px;border:1.500px solid #3d3d3d;border-radius:3px;box-sizing:border-box;background:#fff"></div>
<svg class="ic" style="left:281px;top:9px;width:18px;height:14px" viewBox="0 0 18 14" aria-hidden="true"><use href="#g-home" fill="#fff" transform="translate(9.00 6.85) rotate(0) scale(0.00912 -0.00912) translate(-832.0 -641.5)"/></svg>
<svg class="ic" style="left:388.00px;top:9.00px;width:17.20px;height:13.40px" viewBox="0 0 24.200 20.200" preserveAspectRatio="none" aria-hidden="true"><g fill="#fff" stroke="none"><path d="M0.300 8.200L7.500 0.900L10.100 3.200L2.600 10.300z"/><path d="M15.100 1.900L17.400 0L24.100 6.700L21.800 9z"/><path d="M9.800 5.300L15.100 3.700L20.200 8.500L18.400 10.100L14.600 6.900L12.400 7.400L11.100 9.900L9.500 10.500L8.100 8.800L8.500 6.500z"/><path d="M4.200 10.400L7.600 7.200L8.100 9.600L10.500 11.200L13.400 8.100L15.100 8.100L20.100 13.300L19 14.200L17.200 13L18.200 15.300L17.100 16.200L15.300 14.600L16.200 17L15.100 17.800L13.300 16.300L14.500 19.300L13.400 20L11.700 18.400L12 16.500L5.500 11z"/></g><g stroke="#fff" stroke-width="1.300" stroke-linecap="round"><path d="M5.100 12.800L6.500 11.500M6.400 14.600L8.200 13.200M8.200 15.800L9.700 14.600M9.400 17.600L10.800 16.400"/></g></svg>
<svg class="ic" style="left:495.40px;top:7.60px;width:16.00px;height:17.50px" viewBox="0 0 16 17.500" preserveAspectRatio="none" aria-hidden="true"><rect x="1" y="2.700" width="10.800" height="12.300" fill="none" stroke="#fff" stroke-width="1.400"/><path d="M3.700 4.300V2.900L6.400 0.300L9.100 2.900V4.300z" fill="#fff"/><path d="M3.400 5.700h6.200v1.500H3.400zM3.400 8.700h6.200v1.500H3.400z" fill="#fff"/><path d="M4.300 17.300L5.800 12.700L12.600 6.300L15.900 9.600L9 16z" fill="#28639a"/><path d="M5.200 16.600L6.200 13.300L12.600 7.500L14.800 9.800L8.500 15.700z" fill="#fff"/></svg>
<svg class="ic" style="left:601.00px;top:5.30px;width:21.20px;height:21.20px" viewBox="0 0 21.20 21.20" preserveAspectRatio="none" aria-hidden="true"><g transform="translate(10.60 10.60) rotate(-25.5)"><path fill="#fff" fill-rule="evenodd" d="M-8.60 -3.90q4.30 -1.17 8.60 0t8.60 0v7.80q-4.30 1.17 -8.60 0t-8.60 0zM-7.27 -2.57h4.99v5.15h-4.99zM2.29 -2.57h4.99v5.15h-4.99z"/><rect x="-5.95" y="-1.17" width="2.34" height="2.34" fill="#fff" opacity=".55"/><rect x="3.61" y="-1.17" width="2.34" height="2.34" fill="#fff" opacity=".55"/></g></svg>
<svg class="ic" style="left:709px;top:8px;width:16px;height:16px" viewBox="0 0 16 16" aria-hidden="true"><use href="#g-user" fill="#fff" transform="translate(8.05 7.90) rotate(0) scale(0.00898 -0.00898) translate(-640.0 -640.0)"/></svg>
<svg class="ic" style="left:814px;top:9px;width:20px;height:17px" viewBox="0 0 20 17" aria-hidden="true"><use href="#g-comment" fill="#fff" transform="translate(10.15 8.25) rotate(0) scale(0.00932 -0.00932) translate(-896.0 -511.8)"/></svg>
<svg class="ic" style="left:922px;top:8px;width:17px;height:16px" viewBox="0 0 17 16" aria-hidden="true"><use href="#g-tag" fill="#fff" transform="translate(8.85 8.00) rotate(0) scale(0.00924 -0.00924) translate(-757.5 -650.5)"/></svg>
<svg class="ic" style="left:1028px;top:9px;width:20px;height:16px" viewBox="0 0 20 16" aria-hidden="true"><use href="#g-suitcase" fill="#fff" transform="translate(10.00 7.90) rotate(0) scale(0.00898 -0.00898) translate(-896.0 -640.0)"/></svg>
<svg class="ic" style="left:1139px;top:8px;width:12px;height:17px" viewBox="0 0 12 17" aria-hidden="true"><use href="#g-bulb" fill="#fff" transform="translate(5.75 8.50) rotate(0) scale(0.00911 -0.00911) translate(-512.0 -640.0)"/></svg>
<svg class="ic" style="left:1243px;top:8px;width:17px;height:16px" viewBox="0 0 17 16" aria-hidden="true"><use href="#g-cog" fill="#fff" transform="translate(8.65 8.00) rotate(0) scale(0.00885 -0.00885) translate(-768.0 -640.0)"/></svg>
<svg class="ic" style="left:16.20px;top:84.20px;width:24.00px;height:19.80px" viewBox="0 0 24.200 20.200" preserveAspectRatio="none" aria-hidden="true"><g fill="#3a8fd4" stroke="none"><path d="M0.300 8.200L7.500 0.900L10.100 3.200L2.600 10.300z"/><path d="M15.100 1.900L17.400 0L24.100 6.700L21.800 9z"/><path d="M9.800 5.300L15.100 3.700L20.200 8.500L18.400 10.100L14.600 6.900L12.400 7.400L11.100 9.900L9.500 10.500L8.100 8.800L8.500 6.500z"/><path d="M4.200 10.400L7.600 7.200L8.100 9.600L10.500 11.200L13.400 8.100L15.100 8.100L20.100 13.300L19 14.200L17.200 13L18.200 15.300L17.100 16.200L15.300 14.600L16.200 17L15.100 17.800L13.300 16.300L14.500 19.300L13.400 20L11.700 18.400L12 16.500L5.500 11z"/></g><g stroke="#3a8fd4" stroke-width="1.300" stroke-linecap="round"><path d="M5.100 12.800L6.500 11.500M6.400 14.600L8.200 13.200M8.200 15.800L9.700 14.600M9.400 17.600L10.800 16.400"/></g></svg>
<svg class="ic" style="left:1684px;top:84px;width:27px;height:24px" viewBox="0 0 27 24" aria-hidden="true"><use href="#g-bullhorn" fill="#828282" transform="translate(13.80 11.95) rotate(0) scale(0.01347 -0.01347) translate(-896.0 -639.4)"/></svg>
<svg class="ic" style="left:1742px;top:82px;width:25px;height:27px" viewBox="0 0 25 27" aria-hidden="true"><use href="#g-bell" fill="#828282" transform="translate(12.30 13.50) rotate(0) scale(0.01358 -0.01358) translate(-896.0 -640.0)"/></svg>
<svg class="ic" style="left:1802px;top:82px;width:17px;height:26px" viewBox="0 0 17 26" aria-hidden="true"><use href="#g-mobile" fill="#828282" transform="translate(8.65 13.00) rotate(0) scale(0.01810 -0.01810) translate(-384.0 -640.0)"/></svg>
<svg class="ic" style="left:1856px;top:82px;width:23px;height:27px" viewBox="0 0 23 27" aria-hidden="true"><use href="#g-file_text" fill="#828282" transform="translate(11.30 13.50) rotate(0) scale(0.01341 -0.01341) translate(-768.0 -640.0)"/></svg>
<svg class="ic" style="left:1614px;top:148px;width:16px;height:16px" viewBox="0 0 16 16" aria-hidden="true"><use href="#g-clock" fill="#8a8a8a" transform="translate(8.20 8.15) rotate(0) scale(0.00885 -0.00885) translate(-768.0 -640.0)"/></svg>
<svg class="ic" style="left:1863px;top:151px;width:17px;height:12px" viewBox="0 0 17 12" aria-hidden="true"><use href="#g-chev_up" fill="#777" transform="translate(8.80 6.25) rotate(0) scale(0.00893 -0.00893) translate(-896.0 -538.5)"/></svg>
<svg class="ic" style="left:76.00px;top:230.00px;width:23.80px;height:20.00px" viewBox="0 0 24.200 20.200" preserveAspectRatio="none" aria-hidden="true"><g fill="#8a8a8a" stroke="none"><path d="M0.300 8.200L7.500 0.900L10.100 3.200L2.600 10.300z"/><path d="M15.100 1.900L17.400 0L24.100 6.700L21.800 9z"/><path d="M9.800 5.300L15.100 3.700L20.200 8.500L18.400 10.100L14.600 6.900L12.400 7.400L11.100 9.900L9.500 10.500L8.100 8.800L8.500 6.500z"/><path d="M4.200 10.400L7.600 7.200L8.100 9.600L10.500 11.200L13.400 8.100L15.100 8.100L20.100 13.300L19 14.200L17.200 13L18.200 15.300L17.100 16.200L15.300 14.600L16.200 17L15.100 17.800L13.300 16.300L14.500 19.300L13.400 20L11.700 18.400L12 16.500L5.500 11z"/></g><g stroke="#8a8a8a" stroke-width="1.300" stroke-linecap="round"><path d="M5.100 12.800L6.500 11.500M6.400 14.600L8.200 13.200M8.200 15.800L9.700 14.600M9.400 17.600L10.800 16.400"/></g></svg>
<svg class="ic" style="left:58.10px;top:314.80px;width:19.00px;height:19.00px" viewBox="0 0 19.00 19.00" preserveAspectRatio="none" aria-hidden="true"><g transform="translate(9.50 9.50) rotate(-25.5)"><path fill="#3f97da" fill-rule="evenodd" d="M-7.50 -3.70q3.75 -1.11 7.50 0t7.50 0v7.40q-3.75 1.11 -7.50 0t-7.50 0zM-6.24 -2.44h4.35v4.88h-4.35zM1.89 -2.44h4.35v4.88h-4.35z"/><rect x="-5.18" y="-1.11" width="2.22" height="2.22" fill="#3f97da" opacity=".55"/><rect x="2.96" y="-1.11" width="2.22" height="2.22" fill="#3f97da" opacity=".55"/></g></svg>
<svg class="ic" style="left:223px;top:318px;width:17px;height:14px" viewBox="0 0 17 14" aria-hidden="true"><use href="#g-exchange" fill="#111" transform="translate(8.50 7.35) rotate(0) scale(0.00826 -0.00826) translate(-896.0 -576.0)"/></svg>
<svg class="ic" style="left:280px;top:393px;width:15px;height:10px" viewBox="0 0 15 10" aria-hidden="true"><use href="#g-chev_down" fill="#666" transform="translate(7.70 5.05) rotate(0) scale(0.00744 -0.00744) translate(-896.0 -485.5)"/></svg>
<svg class="ic" style="left:516px;top:393px;width:15px;height:10px" viewBox="0 0 15 10" aria-hidden="true"><use href="#g-chev_down" fill="#666" transform="translate(7.50 5.05) rotate(0) scale(0.00744 -0.00744) translate(-896.0 -485.5)"/></svg>
<svg class="ic" style="left:1512px;top:393px;width:16px;height:11px" viewBox="0 0 16 11" aria-hidden="true"><use href="#g-chev_down" fill="#666" transform="translate(8.15 5.20) rotate(0) scale(0.00773 -0.00773) translate(-896.0 -485.5)"/></svg>
<svg class="ic" style="left:1851px;top:393px;width:16px;height:11px" viewBox="0 0 16 11" aria-hidden="true"><use href="#g-chev_down" fill="#666" transform="translate(7.95 5.20) rotate(0) scale(0.00773 -0.00773) translate(-896.0 -485.5)"/></svg>
<svg class="ic" style="left:1842px;top:485px;width:16px;height:11px" viewBox="0 0 16 11" aria-hidden="true"><use href="#g-chev_down" fill="#666" transform="translate(8.10 5.20) rotate(0) scale(0.00773 -0.00773) translate(-896.0 -485.5)"/></svg>
<svg class="ic" style="left:50px;top:441px;width:14px;height:14px" viewBox="0 0 14 14" aria-hidden="true"><use href="#g-plus" fill="#33a457" transform="translate(6.70 6.80) rotate(0) scale(0.00767 -0.00767) translate(-704.0 -704.0)"/></svg>
<svg class="ic" style="left:213px;top:440px;width:15px;height:17px" viewBox="0 0 15 17" aria-hidden="true"><use href="#g-file_pdf" fill="#33a457" transform="translate(7.25 8.50) rotate(0) scale(0.00781 -0.00781) translate(-768.0 -640.0)"/></svg>
<svg class="ic" style="left:391px;top:444px;width:15px;height:15px" viewBox="0 0 15 15" aria-hidden="true"><use href="#g-wrench" fill="#2e6fb6" transform="translate(7.45 7.25) rotate(0) scale(0.00761 -0.00761) translate(-841.5 -586.5)"/></svg>
<svg class="ic" style="left:495px;top:448px;width:10px;height:7px" viewBox="0 0 10 7" aria-hidden="true"><use href="#g-angle_down" fill="#2e6fb6" transform="translate(5.20 3.65) rotate(0) scale(0.00670 -0.00670) translate(-576.0 -592.0)"/></svg>
<svg class="ic" style="left:524px;top:444px;width:12px;height:14px" viewBox="0 0 12 14" aria-hidden="true"><use href="#g-trash" fill="#cfcfcf" transform="translate(6.00 7.00) rotate(0) scale(0.00710 -0.00710) translate(-704.0 -640.0)"/></svg>
<svg class="ic" style="left:1821px;top:444px;width:14px;height:15px" viewBox="0 0 14 15" aria-hidden="true"><use href="#g-filter" fill="#3a8fd4" transform="translate(6.75 7.55) rotate(0) scale(0.00816 -0.00816) translate(-704.0 -576.0)"/></svg>
<svg class="ic" style="left:127px;top:541px;width:11px;height:8px" viewBox="0 0 11 8" aria-hidden="true"><use href="#g-caret_down" fill="#3b8fd6" transform="translate(5.10 3.90) rotate(0) scale(0.00799 -0.00799) translate(-512.0 -608.0)"/></svg>
<svg class="ic" style="left:1102px;top:580px;width:14px;height:15px" viewBox="0 0 14 15" aria-hidden="true"><use href="#g-clock" fill="#9c9c9c" transform="translate(7.00 7.80) rotate(0) scale(0.00781 -0.00781) translate(-768.0 -640.0)"/></svg>
<svg class="ic" style="left:1788px;top:579px;width:14px;height:17px" viewBox="0 0 14 17" aria-hidden="true"><use href="#g-file_text_o" fill="#2c72b8" transform="translate(7.00 8.80) rotate(0) scale(0.00781 -0.00781) translate(-768.0 -640.0)"/></svg>
<svg class="ic" style="left:1809px;top:582px;width:17px;height:12px" viewBox="0 0 17 12" aria-hidden="true"><use href="#g-eye" fill="#2c72b8" transform="translate(8.75 6.15) rotate(0) scale(0.00790 -0.00790) translate(-896.0 -576.0)"/></svg>
<svg class="ic" style="left:1832px;top:580px;width:15px;height:15px" viewBox="0 0 15 15" aria-hidden="true"><use href="#g-pencil" fill="#2c72b8" transform="translate(7.90 7.70) rotate(0) scale(0.00779 -0.00779) translate(-757.5 -629.5)"/></svg>
<svg class="ic" style="left:1854px;top:579px;width:17px;height:15px" viewBox="0 0 17 15" aria-hidden="true"><use href="#g-ext" fill="#2c72b8" transform="translate(8.45 7.75) rotate(0) scale(0.00775 -0.00775) translate(-896.0 -768.0)"/></svg>
<svg class="ic" style="left:1102px;top:622px;width:14px;height:15px" viewBox="0 0 14 15" aria-hidden="true"><use href="#g-clock" fill="#9c9c9c" transform="translate(7.00 7.80) rotate(0) scale(0.00781 -0.00781) translate(-768.0 -640.0)"/></svg>
<svg class="ic" style="left:1788px;top:621px;width:14px;height:17px" viewBox="0 0 14 17" aria-hidden="true"><use href="#g-file_text_o" fill="#2c72b8" transform="translate(7.00 8.80) rotate(0) scale(0.00781 -0.00781) translate(-768.0 -640.0)"/></svg>
<svg class="ic" style="left:1809px;top:624px;width:17px;height:12px" viewBox="0 0 17 12" aria-hidden="true"><use href="#g-eye" fill="#2c72b8" transform="translate(8.75 6.15) rotate(0) scale(0.00790 -0.00790) translate(-896.0 -576.0)"/></svg>
<svg class="ic" style="left:1832px;top:622px;width:15px;height:15px" viewBox="0 0 15 15" aria-hidden="true"><use href="#g-pencil" fill="#2c72b8" transform="translate(7.90 7.70) rotate(0) scale(0.00779 -0.00779) translate(-757.5 -629.5)"/></svg>
<svg class="ic" style="left:1854px;top:621px;width:17px;height:15px" viewBox="0 0 17 15" aria-hidden="true"><use href="#g-ext" fill="#2c72b8" transform="translate(8.45 7.75) rotate(0) scale(0.00775 -0.00775) translate(-896.0 -768.0)"/></svg>
<svg class="ic" style="left:1102px;top:665px;width:14px;height:15px" viewBox="0 0 14 15" aria-hidden="true"><use href="#g-clock" fill="#9c9c9c" transform="translate(7.00 7.80) rotate(0) scale(0.00781 -0.00781) translate(-768.0 -640.0)"/></svg>
<svg class="ic" style="left:1788px;top:664px;width:14px;height:17px" viewBox="0 0 14 17" aria-hidden="true"><use href="#g-file_text_o" fill="#2c72b8" transform="translate(7.00 8.80) rotate(0) scale(0.00781 -0.00781) translate(-768.0 -640.0)"/></svg>
<svg class="ic" style="left:1809px;top:667px;width:17px;height:12px" viewBox="0 0 17 12" aria-hidden="true"><use href="#g-eye" fill="#2c72b8" transform="translate(8.75 6.15) rotate(0) scale(0.00790 -0.00790) translate(-896.0 -576.0)"/></svg>
<svg class="ic" style="left:1832px;top:665px;width:15px;height:15px" viewBox="0 0 15 15" aria-hidden="true"><use href="#g-pencil" fill="#2c72b8" transform="translate(7.90 7.70) rotate(0) scale(0.00779 -0.00779) translate(-757.5 -629.5)"/></svg>
<svg class="ic" style="left:1854px;top:664px;width:17px;height:15px" viewBox="0 0 17 15" aria-hidden="true"><use href="#g-ext" fill="#2c72b8" transform="translate(8.45 7.75) rotate(0) scale(0.00775 -0.00775) translate(-896.0 -768.0)"/></svg>
<svg class="ic" style="left:1102px;top:708px;width:14px;height:15px" viewBox="0 0 14 15" aria-hidden="true"><use href="#g-clock" fill="#9c9c9c" transform="translate(7.00 7.80) rotate(0) scale(0.00781 -0.00781) translate(-768.0 -640.0)"/></svg>
<svg class="ic" style="left:1788px;top:707px;width:14px;height:17px" viewBox="0 0 14 17" aria-hidden="true"><use href="#g-file_text_o" fill="#2c72b8" transform="translate(7.00 8.80) rotate(0) scale(0.00781 -0.00781) translate(-768.0 -640.0)"/></svg>
<svg class="ic" style="left:1809px;top:710px;width:17px;height:12px" viewBox="0 0 17 12" aria-hidden="true"><use href="#g-eye" fill="#2c72b8" transform="translate(8.75 6.15) rotate(0) scale(0.00790 -0.00790) translate(-896.0 -576.0)"/></svg>
<svg class="ic" style="left:1832px;top:708px;width:15px;height:15px" viewBox="0 0 15 15" aria-hidden="true"><use href="#g-pencil" fill="#2c72b8" transform="translate(7.90 7.70) rotate(0) scale(0.00779 -0.00779) translate(-757.5 -629.5)"/></svg>
<svg class="ic" style="left:1854px;top:707px;width:17px;height:15px" viewBox="0 0 17 15" aria-hidden="true"><use href="#g-ext" fill="#2c72b8" transform="translate(8.45 7.75) rotate(0) scale(0.00775 -0.00775) translate(-896.0 -768.0)"/></svg>
<svg class="ic" style="left:1102px;top:751px;width:14px;height:15px" viewBox="0 0 14 15" aria-hidden="true"><use href="#g-clock" fill="#9c9c9c" transform="translate(7.00 7.80) rotate(0) scale(0.00781 -0.00781) translate(-768.0 -640.0)"/></svg>
<svg class="ic" style="left:1788px;top:750px;width:14px;height:17px" viewBox="0 0 14 17" aria-hidden="true"><use href="#g-file_text_o" fill="#2c72b8" transform="translate(7.00 8.80) rotate(0) scale(0.00781 -0.00781) translate(-768.0 -640.0)"/></svg>
<svg class="ic" style="left:1809px;top:753px;width:17px;height:12px" viewBox="0 0 17 12" aria-hidden="true"><use href="#g-eye" fill="#2c72b8" transform="translate(8.75 6.15) rotate(0) scale(0.00790 -0.00790) translate(-896.0 -576.0)"/></svg>
<svg class="ic" style="left:1832px;top:751px;width:15px;height:15px" viewBox="0 0 15 15" aria-hidden="true"><use href="#g-pencil" fill="#2c72b8" transform="translate(7.90 7.70) rotate(0) scale(0.00779 -0.00779) translate(-757.5 -629.5)"/></svg>
<svg class="ic" style="left:1854px;top:750px;width:17px;height:15px" viewBox="0 0 17 15" aria-hidden="true"><use href="#g-ext" fill="#2c72b8" transform="translate(8.45 7.75) rotate(0) scale(0.00775 -0.00775) translate(-896.0 -768.0)"/></svg>
<svg class="ic" style="left:1102px;top:793px;width:14px;height:15px" viewBox="0 0 14 15" aria-hidden="true"><use href="#g-clock" fill="#9c9c9c" transform="translate(7.00 7.80) rotate(0) scale(0.00781 -0.00781) translate(-768.0 -640.0)"/></svg>
<svg class="ic" style="left:1788px;top:792px;width:14px;height:17px" viewBox="0 0 14 17" aria-hidden="true"><use href="#g-file_text_o" fill="#2c72b8" transform="translate(7.00 8.80) rotate(0) scale(0.00781 -0.00781) translate(-768.0 -640.0)"/></svg>
<svg class="ic" style="left:1809px;top:795px;width:17px;height:12px" viewBox="0 0 17 12" aria-hidden="true"><use href="#g-eye" fill="#2c72b8" transform="translate(8.75 6.15) rotate(0) scale(0.00790 -0.00790) translate(-896.0 -576.0)"/></svg>
<svg class="ic" style="left:1832px;top:793px;width:15px;height:15px" viewBox="0 0 15 15" aria-hidden="true"><use href="#g-pencil" fill="#2c72b8" transform="translate(7.90 7.70) rotate(0) scale(0.00779 -0.00779) translate(-757.5 -629.5)"/></svg>
<svg class="ic" style="left:1854px;top:792px;width:17px;height:15px" viewBox="0 0 17 15" aria-hidden="true"><use href="#g-ext" fill="#2c72b8" transform="translate(8.45 7.75) rotate(0) scale(0.00775 -0.00775) translate(-896.0 -768.0)"/></svg>
<svg class="ic" style="left:1102px;top:836px;width:14px;height:15px" viewBox="0 0 14 15" aria-hidden="true"><use href="#g-check_circle" fill="#222" transform="translate(7.00 7.30) rotate(0) scale(0.00781 -0.00781) translate(-768.0 -640.0)"/></svg>
<svg class="ic" style="left:1788px;top:835px;width:14px;height:17px" viewBox="0 0 14 17" aria-hidden="true"><use href="#g-file_text_o" fill="#2c72b8" transform="translate(7.00 8.80) rotate(0) scale(0.00781 -0.00781) translate(-768.0 -640.0)"/></svg>
<svg class="ic" style="left:1809px;top:838px;width:17px;height:12px" viewBox="0 0 17 12" aria-hidden="true"><use href="#g-eye" fill="#2c72b8" transform="translate(8.75 6.15) rotate(0) scale(0.00790 -0.00790) translate(-896.0 -576.0)"/></svg>
<svg class="ic" style="left:1832px;top:836px;width:15px;height:15px" viewBox="0 0 15 15" aria-hidden="true"><use href="#g-pencil" fill="#2c72b8" transform="translate(7.90 7.70) rotate(0) scale(0.00779 -0.00779) translate(-757.5 -629.5)"/></svg>
<svg class="ic" style="left:1854px;top:835px;width:17px;height:15px" viewBox="0 0 17 15" aria-hidden="true"><use href="#g-ext" fill="#2c72b8" transform="translate(8.45 7.75) rotate(0) scale(0.00775 -0.00775) translate(-896.0 -768.0)"/></svg>
<svg class="ic" style="left:1102px;top:898px;width:14px;height:15px" viewBox="0 0 14 15" aria-hidden="true"><use href="#g-check_circle" fill="#222" transform="translate(7.00 7.30) rotate(0) scale(0.00781 -0.00781) translate(-768.0 -640.0)"/></svg>
<svg class="ic" style="left:1788px;top:897px;width:14px;height:17px" viewBox="0 0 14 17" aria-hidden="true"><use href="#g-file_text_o" fill="#2c72b8" transform="translate(7.00 8.80) rotate(0) scale(0.00781 -0.00781) translate(-768.0 -640.0)"/></svg>
<svg class="ic" style="left:1809px;top:900px;width:17px;height:12px" viewBox="0 0 17 12" aria-hidden="true"><use href="#g-eye" fill="#2c72b8" transform="translate(8.75 6.15) rotate(0) scale(0.00790 -0.00790) translate(-896.0 -576.0)"/></svg>
<svg class="ic" style="left:1832px;top:898px;width:15px;height:15px" viewBox="0 0 15 15" aria-hidden="true"><use href="#g-pencil" fill="#2c72b8" transform="translate(7.90 7.70) rotate(0) scale(0.00779 -0.00779) translate(-757.5 -629.5)"/></svg>
<svg class="ic" style="left:1854px;top:897px;width:17px;height:15px" viewBox="0 0 17 15" aria-hidden="true"><use href="#g-ext" fill="#2c72b8" transform="translate(8.45 7.75) rotate(0) scale(0.00775 -0.00775) translate(-896.0 -768.0)"/></svg>
<svg class="ic" style="left:1102px;top:941px;width:14px;height:15px" viewBox="0 0 14 15" aria-hidden="true"><use href="#g-clock" fill="#9c9c9c" transform="translate(7.00 7.80) rotate(0) scale(0.00781 -0.00781) translate(-768.0 -640.0)"/></svg>
<svg class="ic" style="left:1788px;top:940px;width:14px;height:17px" viewBox="0 0 14 17" aria-hidden="true"><use href="#g-file_text_o" fill="#2c72b8" transform="translate(7.00 8.80) rotate(0) scale(0.00781 -0.00781) translate(-768.0 -640.0)"/></svg>
<svg class="ic" style="left:1809px;top:943px;width:17px;height:12px" viewBox="0 0 17 12" aria-hidden="true"><use href="#g-eye" fill="#2c72b8" transform="translate(8.75 6.15) rotate(0) scale(0.00790 -0.00790) translate(-896.0 -576.0)"/></svg>
<svg class="ic" style="left:1832px;top:941px;width:15px;height:15px" viewBox="0 0 15 15" aria-hidden="true"><use href="#g-pencil" fill="#2c72b8" transform="translate(7.90 7.70) rotate(0) scale(0.00779 -0.00779) translate(-757.5 -629.5)"/></svg>
<svg class="ic" style="left:1854px;top:940px;width:17px;height:15px" viewBox="0 0 17 15" aria-hidden="true"><use href="#g-ext" fill="#2c72b8" transform="translate(8.45 7.75) rotate(0) scale(0.00775 -0.00775) translate(-896.0 -768.0)"/></svg>
<span class="t" style="left:257.54px;top:27.00px;font-size:15.2px;line-height:18px;color:#fff;transform:scaleX(0.9283);">Properties</span>
<span class="t" style="left:374.16px;top:27.00px;font-size:15.2px;line-height:18px;color:#fff;transform:scaleX(0.9112);">Leases</span>
<span class="t" style="left:464.94px;top:27.00px;font-size:15.2px;line-height:18px;color:#fff;transform:scaleX(0.9098);">Work Orders</span>
<span class="t" style="left:581.67px;top:27.00px;font-size:15.2px;line-height:18px;color:#fff;transform:scaleX(0.9288);">Accounts</span>
<span class="t" style="left:676.37px;top:27.00px;font-size:15.2px;line-height:18px;color:#fff;transform:scaleX(0.9174);">Stakeholders</span>
<span class="t" style="left:794.67px;top:27.00px;font-size:15.2px;line-height:18px;color:#fff;transform:scaleX(0.9090);">Requests</span>
<span class="t" style="left:911.17px;top:27.00px;font-size:15.2px;line-height:18px;color:#fff;transform:scaleX(0.8889);">Assets</span>
<span class="t" style="left:1021.94px;top:27.00px;font-size:15.2px;line-height:18px;color:#fff;transform:scaleX(0.9167);">Work</span>
<span class="t" style="left:1116.97px;top:27.00px;font-size:15.2px;line-height:18px;color:#fff;transform:scaleX(0.9136);">Analytics</span>
<span class="t" style="left:1231.67px;top:27.00px;font-size:15.2px;line-height:18px;color:#fff;transform:scaleX(0.9513);">Admin</span>
<span class="t" style="left:69.04px;top:19.00px;font-size:15.3px;line-height:18px;color:#fff;transform:scaleX(0.9220);">Property Management</span>
<span class="t" style="left:50.02px;top:80.00px;font-size:24.6px;line-height:27px;color:#3f97da;-webkit-text-stroke:0.4px #f1f1f1;transform:scaleX(0.9816);">Leases</span>
<span class="t" style="left:24.96px;top:146.00px;font-size:17.3px;line-height:20px;color:#222;transform:scaleX(0.9418);">Lease Details</span>
<span class="t" style="left:153.45px;top:146.00px;font-size:17.3px;line-height:20px;color:#222;transform:scaleX(0.9525);">Requests</span>
<span class="t" style="left:254.23px;top:146.00px;font-size:17.3px;line-height:20px;color:#222;transform:scaleX(0.9389);">Work Orders</span>
<span class="t" style="left:475.98px;top:146.00px;font-size:17.3px;line-height:20px;color:#222;transform:scaleX(0.9316);">Events &amp; To-Dos</span>
<span class="t" style="left:625.66px;top:146.00px;font-size:17.3px;line-height:20px;color:#222;transform:scaleX(0.9636);">Inspections</span>
<span class="t" style="left:1632.65px;top:146.00px;font-size:17.3px;line-height:20px;color:#8c8c8c;transform:scaleX(0.9532);">Reminders</span>
<span class="t" style="left:1733.67px;top:148.00px;font-size:17.3px;line-height:20px;color:#8c8c8c;transform:scaleX(0.9500);">Custom Fields</span>
<span class="t" style="left:377.77px;top:148.00px;font-size:17.3px;line-height:20px;color:#4a9ddd;transform:scaleX(0.9569);">Accounts</span>
<span class="t" style="left:152.46px;top:202.00px;font-size:20.8px;line-height:23px;color:#3f97da;-webkit-text-stroke:0.5px #fff;transform:scaleX(1.0230);">Accounts</span>
<span class="t" style="left:151.93px;top:233.00px;font-size:13.6px;line-height:16px;color:#2b2b2b;-webkit-text-stroke:0.45px #2b2b2b;transform:scaleX(1.0446);">Ongoing Lease with James Bond from 30/06/2024 to 29/06/2025 at AED 190,000 Per Year (4 Cheques)  - 3, al reem 2, Arabian Ranches, Dubai</span>
<span class="t" style="left:151.83px;top:253.00px;font-size:14.2px;line-height:17px;color:#7b7b7b;transform:scaleX(0.9169);">Lease Ref: PR063-LE-2</span>
<span class="t" style="left:1651.17px;top:240.00px;font-size:14.2px;line-height:17px;color:#222;-webkit-text-stroke:0.45px #222;transform:scaleX(1.0442);">Tom Dickson</span>
<span class="t" style="left:1773.37px;top:240.00px;font-size:14.2px;line-height:17px;color:#222;-webkit-text-stroke:0.45px #222;transform:scaleX(1.0442);">Tom Dickson</span>
<span class="t" style="left:1644.97px;top:258.00px;font-size:15px;line-height:17px;color:#9a9a9a;transform:scaleX(0.9317);">Assigned Agent</span>
<span class="t" style="left:1758.54px;top:258.00px;font-size:15px;line-height:17px;color:#9a9a9a;transform:scaleX(0.9411);">Property Manager</span>
<span class="t" style="left:79.87px;top:316.00px;font-size:15.7px;line-height:18px;color:#3f97da;transform:scaleX(0.9477);">Transactions</span>
<span class="t" style="left:243.79px;top:316.00px;font-size:15.7px;line-height:18px;color:#1c1c1c;transform:scaleX(0.9735);">Income and Expense</span>
<span class="t" style="left:34.37px;top:388.00px;font-size:14.2px;line-height:17px;color:#333;transform:scaleX(0.9802);">Show</span>
<span class="t" style="left:96.37px;top:389.00px;font-size:14.2px;line-height:17px;color:#777;transform:scaleX(0.9862);">All</span>
<span class="t" style="left:331.34px;top:389.00px;font-size:14.2px;line-height:17px;color:#777;transform:scaleX(0.9954);">Pending &amp; Paid records</span>
<span class="t" style="left:1335.37px;top:389.00px;font-size:14.2px;line-height:17px;color:#777;transform:scaleX(0.9727);">Last 1 Year</span>
<span class="t" style="left:1674.07px;top:389.00px;font-size:14.2px;line-height:17px;color:#777;transform:scaleX(0.9741);">Last 1 Year</span>
<span class="t" style="left:1624.87px;top:481.00px;font-size:14.2px;line-height:17px;color:#777;transform:scaleX(1.0200);">All</span>
<span class="t" style="left:1165.87px;top:388.00px;font-size:14.6px;line-height:17px;color:#333;transform:scaleX(0.9887);">All-Time</span>
<span class="t" style="left:1255.64px;top:388.00px;font-size:14.6px;line-height:17px;color:#333;transform:scaleX(0.9664);">Due Date</span>
<span class="t" style="left:1570.78px;top:388.00px;font-size:14.6px;line-height:17px;color:#333;transform:scaleX(0.9668);">Cleared Date</span>
<span class="t" style="left:66.77px;top:439.00px;font-size:15px;line-height:17px;color:#33a06a;transform:scaleX(0.9313);">Add a transaction</span>
<span class="t" style="left:231.82px;top:439.00px;font-size:15px;line-height:17px;color:#33a06a;transform:scaleX(0.9550);">Download Statement</span>
<span class="t" style="left:407.12px;top:443.00px;font-size:14.2px;line-height:17px;color:#2e6fb6;transform:scaleX(1.0170);">More Actions</span>
<span class="t" style="left:538.82px;top:443.00px;font-size:14.2px;line-height:17px;color:#c6c6c6;transform:scaleX(1.0122);">Delete</span>
<span class="t" style="left:1492.67px;top:443.00px;font-size:14.6px;line-height:17px;color:#333;transform:scaleX(0.9558);">Show Cheque Details</span>
<span class="t" style="left:1659.37px;top:443.00px;font-size:14.6px;line-height:17px;color:#333;transform:scaleX(0.9445);">Show Void Transactions</span>
<span class="t" style="left:1839.19px;top:443.00px;font-size:14.6px;line-height:17px;color:#4a9ddd;transform:scaleX(1.0130);">Filter</span>
<span class="t" style="left:1491.08px;top:480.00px;font-size:14.4px;line-height:17px;color:#222;-webkit-text-stroke:0.45px #222;transform:scaleX(0.9786);">Transactions Of:</span>
<span class="t" style="left:62.52px;top:536.00px;font-size:14.4px;line-height:17px;color:#3b8fd6;-webkit-text-stroke:0.45px #3b8fd6;transform:scaleX(0.9970);">Due Date</span>
<span class="t" style="left:234.77px;top:536.00px;font-size:14.4px;line-height:17px;color:#3b8fd6;-webkit-text-stroke:0.45px #3b8fd6;transform:scaleX(0.9925);">Cleared Date</span>
<span class="t" style="left:406.17px;top:536.00px;font-size:14.4px;line-height:17px;color:#3b8fd6;-webkit-text-stroke:0.45px #3b8fd6;transform:scaleX(0.9593);">Payer</span>
<span class="t" style="left:578.16px;top:536.00px;font-size:14.4px;line-height:17px;color:#3b8fd6;-webkit-text-stroke:0.45px #3b8fd6;transform:scaleX(0.9669);">Payee</span>
<span class="t" style="left:749.81px;top:536.00px;font-size:14.4px;line-height:17px;color:#3b8fd6;-webkit-text-stroke:0.45px #3b8fd6;transform:scaleX(1.0034);">Payment Mode</span>
<span class="t" style="left:928.38px;top:536.00px;font-size:14.4px;line-height:17px;color:#3b8fd6;-webkit-text-stroke:0.45px #3b8fd6;">Type</span>
<span class="t" style="left:1099.85px;top:536.00px;font-size:14.4px;line-height:17px;color:#3b8fd6;-webkit-text-stroke:0.45px #3b8fd6;transform:scaleX(0.9965);">Status</span>
<span class="t" style="left:1327.17px;top:536.00px;font-size:14.4px;line-height:17px;color:#3b8fd6;-webkit-text-stroke:0.45px #3b8fd6;transform:scaleX(0.9612);">Amount (AED)</span>
<span class="t" style="left:1513.20px;top:536.00px;font-size:14.4px;line-height:17px;color:#3b8fd6;-webkit-text-stroke:0.45px #3b8fd6;transform:scaleX(0.9240);">Taxes (AED)</span>
<span class="t" style="left:1690.19px;top:536.00px;font-size:14.4px;line-height:17px;color:#3b8fd6;-webkit-text-stroke:0.45px #3b8fd6;transform:scaleX(0.9439);">Total (AED)</span>
<span class="t" style="left:62.65px;top:579.00px;font-size:14.2px;line-height:17px;color:#333;transform:scaleX(1.0103);">30/03/2025</span>
<span class="t" style="left:234.40px;top:579.00px;font-size:14.2px;line-height:17px;color:#333;transform:scaleX(1.2671);">-</span>
<span class="t" style="left:406.39px;top:579.00px;font-size:14.2px;line-height:17px;color:#333;transform:scaleX(0.9468);">James Bond</span>
<span class="t" style="left:577.66px;top:579.00px;font-size:14.2px;line-height:17px;color:#333;transform:scaleX(0.9798);">PropSpace Demo</span>
<span class="t" style="left:749.79px;top:579.00px;font-size:14.2px;line-height:17px;color:#333;transform:scaleX(0.9886);">Cheque</span>
<span class="t" style="left:927.08px;top:579.00px;font-size:14.2px;line-height:17px;color:#333;transform:scaleX(0.9635);">Lease - Rent Payment</span>
<span class="t" style="left:1118.76px;top:579.00px;font-size:14.2px;line-height:17px;color:#9a9a9a;font-style:italic;">Pending</span>
<span class="t" style="left:1354.18px;top:579.00px;font-size:14.2px;line-height:17px;color:#333;transform:scaleX(0.9720);">47,500.00</span>
<span class="t" style="left:1559.95px;top:579.00px;font-size:14.2px;line-height:17px;color:#333;transform:scaleX(0.9919);">0.00</span>
<span class="t" style="left:1677.29px;top:579.00px;font-size:14.2px;line-height:17px;color:#3aa564;transform:scaleX(0.9379);">47,500.00 CR</span>
<span class="t" style="left:62.65px;top:621.00px;font-size:14.2px;line-height:17px;color:#333;transform:scaleX(1.0103);">30/03/2025</span>
<span class="t" style="left:234.40px;top:621.00px;font-size:14.2px;line-height:17px;color:#333;transform:scaleX(1.2671);">-</span>
<span class="t" style="left:406.39px;top:621.00px;font-size:14.2px;line-height:17px;color:#333;transform:scaleX(0.9468);">James Bond</span>
<span class="t" style="left:577.66px;top:621.00px;font-size:14.2px;line-height:17px;color:#333;transform:scaleX(0.9798);">PropSpace Demo</span>
<span class="t" style="left:749.79px;top:621.00px;font-size:14.2px;line-height:17px;color:#333;transform:scaleX(0.9886);">Cheque</span>
<span class="t" style="left:927.08px;top:621.00px;font-size:14.2px;line-height:17px;color:#333;transform:scaleX(0.9635);">Lease - Rent Payment</span>
<span class="t" style="left:1118.76px;top:621.00px;font-size:14.2px;line-height:17px;color:#9a9a9a;font-style:italic;">Pending</span>
<span class="t" style="left:1354.18px;top:621.00px;font-size:14.2px;line-height:17px;color:#333;transform:scaleX(0.9720);">47,500.00</span>
<span class="t" style="left:1559.95px;top:621.00px;font-size:14.2px;line-height:17px;color:#333;transform:scaleX(0.9919);">0.00</span>
<span class="t" style="left:1677.29px;top:621.00px;font-size:14.2px;line-height:17px;color:#3aa564;transform:scaleX(0.9379);">47,500.00 CR</span>
<span class="t" style="left:62.66px;top:664.00px;font-size:14.2px;line-height:17px;color:#333;transform:scaleX(1.0077);">30/12/2024</span>
<span class="t" style="left:234.40px;top:664.00px;font-size:14.2px;line-height:17px;color:#333;transform:scaleX(1.2671);">-</span>
<span class="t" style="left:406.39px;top:664.00px;font-size:14.2px;line-height:17px;color:#333;transform:scaleX(0.9468);">James Bond</span>
<span class="t" style="left:577.66px;top:664.00px;font-size:14.2px;line-height:17px;color:#333;transform:scaleX(0.9798);">PropSpace Demo</span>
<span class="t" style="left:749.79px;top:664.00px;font-size:14.2px;line-height:17px;color:#333;transform:scaleX(0.9886);">Cheque</span>
<span class="t" style="left:927.08px;top:664.00px;font-size:14.2px;line-height:17px;color:#333;transform:scaleX(0.9635);">Lease - Rent Payment</span>
<span class="t" style="left:1118.76px;top:664.00px;font-size:14.2px;line-height:17px;color:#9a9a9a;font-style:italic;">Pending</span>
<span class="t" style="left:1354.18px;top:664.00px;font-size:14.2px;line-height:17px;color:#333;transform:scaleX(0.9720);">47,500.00</span>
<span class="t" style="left:1559.95px;top:664.00px;font-size:14.2px;line-height:17px;color:#333;transform:scaleX(0.9919);">0.00</span>
<span class="t" style="left:1677.29px;top:664.00px;font-size:14.2px;line-height:17px;color:#3aa564;transform:scaleX(0.9379);">47,500.00 CR</span>
<span class="t" style="left:62.66px;top:707.00px;font-size:14.2px;line-height:17px;color:#333;transform:scaleX(1.0077);">30/12/2024</span>
<span class="t" style="left:234.40px;top:707.00px;font-size:14.2px;line-height:17px;color:#333;transform:scaleX(1.2671);">-</span>
<span class="t" style="left:406.39px;top:707.00px;font-size:14.2px;line-height:17px;color:#333;transform:scaleX(0.9468);">James Bond</span>
<span class="t" style="left:577.66px;top:707.00px;font-size:14.2px;line-height:17px;color:#333;transform:scaleX(0.9798);">PropSpace Demo</span>
<span class="t" style="left:749.79px;top:707.00px;font-size:14.2px;line-height:17px;color:#333;transform:scaleX(0.9886);">Cheque</span>
<span class="t" style="left:927.08px;top:707.00px;font-size:14.2px;line-height:17px;color:#333;transform:scaleX(0.9635);">Lease - Rent Payment</span>
<span class="t" style="left:1118.76px;top:707.00px;font-size:14.2px;line-height:17px;color:#9a9a9a;font-style:italic;">Pending</span>
<span class="t" style="left:1354.18px;top:707.00px;font-size:14.2px;line-height:17px;color:#333;transform:scaleX(0.9720);">47,500.00</span>
<span class="t" style="left:1559.95px;top:707.00px;font-size:14.2px;line-height:17px;color:#333;transform:scaleX(0.9919);">0.00</span>
<span class="t" style="left:1677.29px;top:707.00px;font-size:14.2px;line-height:17px;color:#3aa564;transform:scaleX(0.9379);">47,500.00 CR</span>
<span class="t" style="left:62.66px;top:750.00px;font-size:14.2px;line-height:17px;color:#333;transform:scaleX(1.0077);">30/09/2024</span>
<span class="t" style="left:234.40px;top:750.00px;font-size:14.2px;line-height:17px;color:#333;transform:scaleX(1.2671);">-</span>
<span class="t" style="left:406.39px;top:750.00px;font-size:14.2px;line-height:17px;color:#333;transform:scaleX(0.9468);">James Bond</span>
<span class="t" style="left:577.66px;top:750.00px;font-size:14.2px;line-height:17px;color:#333;transform:scaleX(0.9798);">PropSpace Demo</span>
<span class="t" style="left:749.79px;top:750.00px;font-size:14.2px;line-height:17px;color:#333;transform:scaleX(0.9886);">Cheque</span>
<span class="t" style="left:927.08px;top:750.00px;font-size:14.2px;line-height:17px;color:#333;transform:scaleX(0.9635);">Lease - Rent Payment</span>
<span class="t" style="left:1118.76px;top:750.00px;font-size:14.2px;line-height:17px;color:#9a9a9a;font-style:italic;">Pending</span>
<span class="t" style="left:1354.18px;top:750.00px;font-size:14.2px;line-height:17px;color:#333;transform:scaleX(0.9720);">47,500.00</span>
<span class="t" style="left:1559.95px;top:750.00px;font-size:14.2px;line-height:17px;color:#333;transform:scaleX(0.9919);">0.00</span>
<span class="t" style="left:1677.29px;top:750.00px;font-size:14.2px;line-height:17px;color:#3aa564;transform:scaleX(0.9379);">47,500.00 CR</span>
<span class="t" style="left:62.66px;top:792.00px;font-size:14.2px;line-height:17px;color:#333;transform:scaleX(1.0077);">30/09/2024</span>
<span class="t" style="left:234.40px;top:792.00px;font-size:14.2px;line-height:17px;color:#333;transform:scaleX(1.2671);">-</span>
<span class="t" style="left:406.39px;top:792.00px;font-size:14.2px;line-height:17px;color:#333;transform:scaleX(0.9468);">James Bond</span>
<span class="t" style="left:577.66px;top:792.00px;font-size:14.2px;line-height:17px;color:#333;transform:scaleX(0.9798);">PropSpace Demo</span>
<span class="t" style="left:749.79px;top:792.00px;font-size:14.2px;line-height:17px;color:#333;transform:scaleX(0.9886);">Cheque</span>
<span class="t" style="left:927.08px;top:792.00px;font-size:14.2px;line-height:17px;color:#333;transform:scaleX(0.9635);">Lease - Rent Payment</span>
<span class="t" style="left:1118.76px;top:792.00px;font-size:14.2px;line-height:17px;color:#9a9a9a;font-style:italic;">Pending</span>
<span class="t" style="left:1354.18px;top:792.00px;font-size:14.2px;line-height:17px;color:#333;transform:scaleX(0.9720);">47,500.00</span>
<span class="t" style="left:1559.95px;top:792.00px;font-size:14.2px;line-height:17px;color:#333;transform:scaleX(0.9919);">0.00</span>
<span class="t" style="left:1677.29px;top:792.00px;font-size:14.2px;line-height:17px;color:#3aa564;transform:scaleX(0.9379);">47,500.00 CR</span>
<span class="t" style="left:62.64px;top:835.00px;font-size:14.2px;line-height:17px;color:#333;transform:scaleX(1.0079);">03/07/2024</span>
<span class="t" style="left:234.63px;top:835.00px;font-size:14.2px;line-height:17px;color:#333;transform:scaleX(1.0193);">03/07/2024</span>
<span class="t" style="left:406.39px;top:835.00px;font-size:14.2px;line-height:17px;color:#333;transform:scaleX(0.9468);">James Bond</span>
<span class="t" style="left:577.66px;top:835.00px;font-size:14.2px;line-height:17px;color:#333;transform:scaleX(0.9798);">PropSpace Demo</span>
<span class="t" style="left:749.79px;top:835.00px;font-size:14.2px;line-height:17px;color:#333;transform:scaleX(0.9886);">Cheque</span>
<span class="t" style="left:927.05px;top:835.00px;font-size:14.2px;line-height:17px;color:#333;transform:scaleX(0.9853);">Lease - Maintenance</span>
<span class="t" style="left:927.61px;top:855.00px;font-size:14.2px;line-height:17px;color:#333;transform:scaleX(0.9824);">charges</span>
<span class="t" style="left:1118.21px;top:835.00px;font-size:14.2px;line-height:17px;color:#222;-webkit-text-stroke:0.45px #222;transform:scaleX(1.0218);">Paid</span>
<span class="t" style="left:1361.75px;top:835.00px;font-size:14.2px;line-height:17px;color:#333;transform:scaleX(0.9739);">5,000.00</span>
<span class="t" style="left:1559.95px;top:835.00px;font-size:14.2px;line-height:17px;color:#333;transform:scaleX(0.9919);">0.00</span>
<span class="t" style="left:1684.87px;top:835.00px;font-size:14.2px;line-height:17px;color:#3aa564;transform:scaleX(0.9357);">5,000.00 CR</span>
<span class="t" style="left:62.66px;top:897.00px;font-size:14.2px;line-height:17px;color:#333;transform:scaleX(1.0077);">30/06/2024</span>
<span class="t" style="left:234.63px;top:897.00px;font-size:14.2px;line-height:17px;color:#333;transform:scaleX(1.0193);">01/07/2024</span>
<span class="t" style="left:406.39px;top:897.00px;font-size:14.2px;line-height:17px;color:#333;transform:scaleX(0.9468);">James Bond</span>
<span class="t" style="left:577.66px;top:897.00px;font-size:14.2px;line-height:17px;color:#333;transform:scaleX(0.9798);">PropSpace Demo</span>
<span class="t" style="left:749.79px;top:897.00px;font-size:14.2px;line-height:17px;color:#333;transform:scaleX(0.9886);">Cheque</span>
<span class="t" style="left:927.08px;top:897.00px;font-size:14.2px;line-height:17px;color:#333;transform:scaleX(0.9635);">Lease - Rent Payment</span>
<span class="t" style="left:1118.21px;top:897.00px;font-size:14.2px;line-height:17px;color:#222;-webkit-text-stroke:0.45px #222;transform:scaleX(1.0218);">Paid</span>
<span class="t" style="left:1354.18px;top:897.00px;font-size:14.2px;line-height:17px;color:#333;transform:scaleX(0.9720);">47,500.00</span>
<span class="t" style="left:1559.95px;top:897.00px;font-size:14.2px;line-height:17px;color:#333;transform:scaleX(0.9919);">0.00</span>
<span class="t" style="left:1677.29px;top:897.00px;font-size:14.2px;line-height:17px;color:#3aa564;transform:scaleX(0.9379);">47,500.00 CR</span>
<span class="t" style="left:62.66px;top:940.00px;font-size:14.2px;line-height:17px;color:#333;transform:scaleX(1.0077);">30/06/2024</span>
<span class="t" style="left:234.40px;top:940.00px;font-size:14.2px;line-height:17px;color:#333;transform:scaleX(1.2671);">-</span>
<span class="t" style="left:406.39px;top:940.00px;font-size:14.2px;line-height:17px;color:#333;transform:scaleX(0.9468);">James Bond</span>
<span class="t" style="left:577.66px;top:940.00px;font-size:14.2px;line-height:17px;color:#333;transform:scaleX(0.9798);">PropSpace Demo</span>
<span class="t" style="left:749.79px;top:940.00px;font-size:14.2px;line-height:17px;color:#333;transform:scaleX(0.9886);">Cheque</span>
<span class="t" style="left:927.08px;top:940.00px;font-size:14.2px;line-height:17px;color:#333;transform:scaleX(0.9635);">Lease - Rent Payment</span>
<span class="t" style="left:1118.76px;top:940.00px;font-size:14.2px;line-height:17px;color:#9a9a9a;font-style:italic;">Pending</span>
<span class="t" style="left:1354.18px;top:940.00px;font-size:14.2px;line-height:17px;color:#333;transform:scaleX(0.9720);">47,500.00</span>
<span class="t" style="left:1559.95px;top:940.00px;font-size:14.2px;line-height:17px;color:#333;transform:scaleX(0.9919);">0.00</span>
<span class="t" style="left:1677.29px;top:940.00px;font-size:14.2px;line-height:17px;color:#3aa564;transform:scaleX(0.9379);">47,500.00 CR</span>
<svg class="ic" style="left:0;top:0;width:1918px;height:971px" viewBox="0 0 1918 971" aria-hidden="true">
<g stroke="#e01b1f" stroke-width="2.300" stroke-linecap="round" fill="none">
<path d="M873.500 146.300L866 144.400L449 48.500"/><path d="M869 145.600L468 173.900"/><path d="M867 146L189 435.300"/></g>
<g fill="#e01b1f"><path d="M439.700 45.800L452.800 43L450.600 54.200z"/><path d="M459.400 174.400L470 168.200L471 179z"/><path d="M180 439.400L188.700 429.300L193.200 440.200z"/></g></svg>
<div class="b" style="left:1913px;top:0;width:5px;height:971px;background:#f1f1f1"></div>
<div class="b" style="left:1913px;top:1px;width:6px;height:486px;background:#7b7b7b;border-radius:3px 0 0 3px"></div>
<div class="b" style="left:0;top:970px;width:1918px;height:1px;background:#0a0a0a"></div>
</body></html>
